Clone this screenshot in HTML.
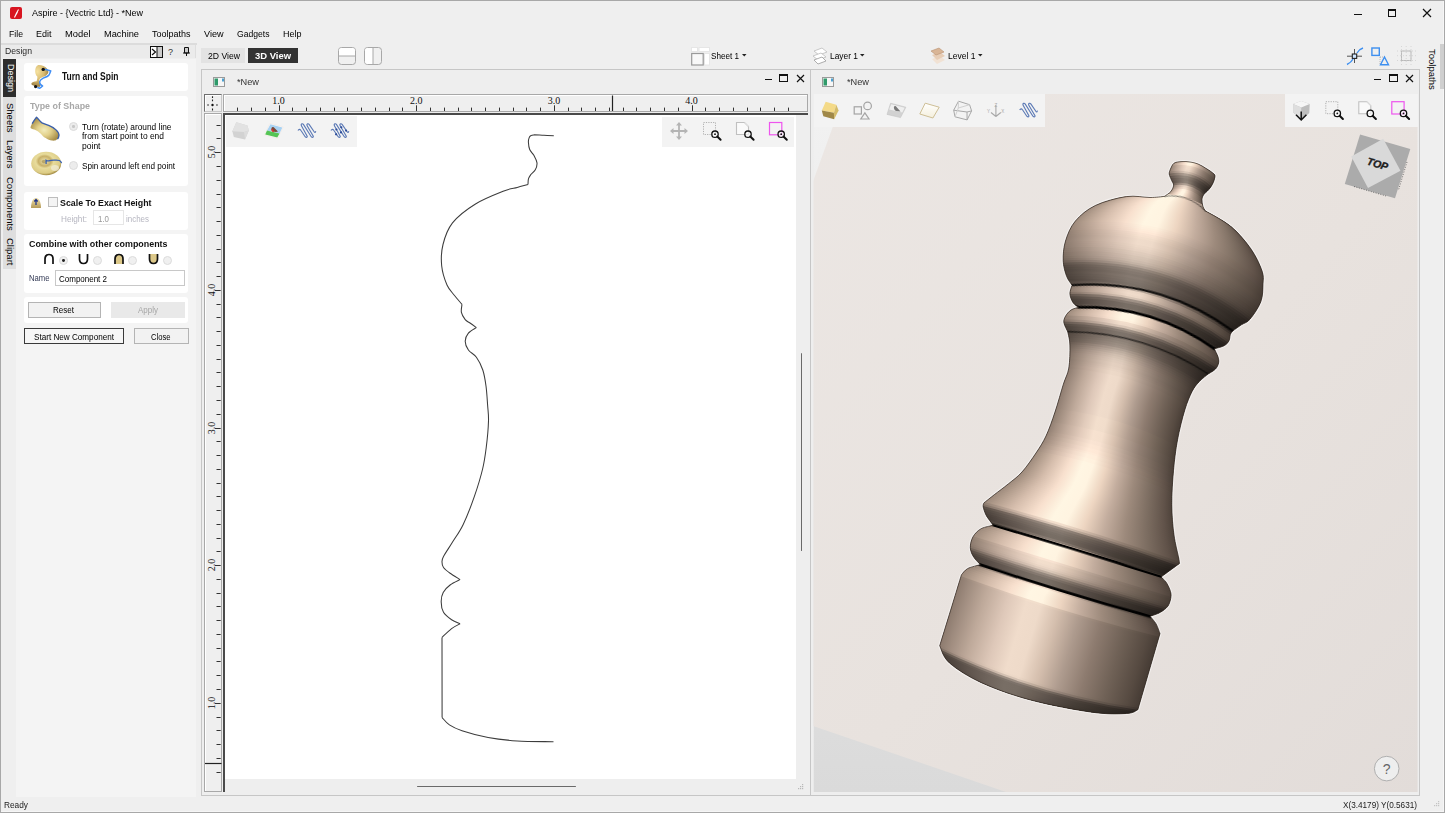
<!DOCTYPE html>
<html><head><meta charset="utf-8">
<style>
*{margin:0;padding:0;box-sizing:border-box}
html,body{width:1445px;height:813px;overflow:hidden;background:#efefef;font-family:"Liberation Sans",sans-serif;font-size:9.5px;color:#000}
.a{position:absolute}
.t{position:absolute;white-space:nowrap;line-height:1}
.b{font-weight:bold}
svg{position:absolute;overflow:visible}
.card{position:absolute;left:24px;width:164px;background:#fff;border-radius:3px}
.rad{position:absolute;width:9px;height:9px;border-radius:50%;background:#ececec;border:1px solid #dcdcdc}
</style></head><body>
<div class="a" style="left:0;top:0;width:1445px;height:813px;border:1px solid #a8a8a8"></div><div class="a" style="left:1443px;top:1px;width:1px;height:811px;background:#f6f6f6"></div><div class="a" style="left:1px;top:811px;width:1443px;height:1px;background:#f6f6f6"></div>

<!-- ============ TITLE BAR ============ -->
<svg style="left:10px;top:7px" width="13" height="13"><rect x="0" y="0" width="12" height="12" rx="2" fill="#d81520"/><path d="M4.5 10.5 C6 7 7 5 8.5 2.5 M5.5 8.5 L7.5 5" stroke="#fff" stroke-width="1.1" fill="none"/></svg>
<div class="t fit" style="left:32px;top:7.7px;;transform:scaleX(0.9469);transform-origin:0 0">Aspire - {Vectric Ltd} - *New</div>
<div class="a" style="left:1354px;top:13.5px;width:8px;height:1.3px;background:#111"></div>
<div class="a" style="left:1388px;top:9px;width:8px;height:8px;border:1px solid #111;border-top-width:2px"></div>
<svg style="left:1422px;top:8px" width="10" height="10"><path d="M1 1L9 9M9 1L1 9" stroke="#111" stroke-width="1.2"/></svg>

<!-- ============ MENU ============ -->
<div class="t fit" style="left:9px;top:29.3px;;transform:scaleX(0.9143);transform-origin:0 0">File</div>
<div class="t fit" style="left:36px;top:29.3px;;transform:scaleX(0.9466);transform-origin:0 0">Edit</div>
<div class="t fit" style="left:65px;top:29.3px;;transform:scaleX(0.9855);transform-origin:0 0">Model</div>
<div class="t fit" style="left:103.5px;top:29.3px;;transform:scaleX(0.9743);transform-origin:0 0">Machine</div>
<div class="t fit" style="left:152px;top:29.3px;;transform:scaleX(0.9466);transform-origin:0 0">Toolpaths</div>
<div class="t fit" style="left:204px;top:29.3px;;transform:scaleX(0.9549);transform-origin:0 0">View</div>
<div class="t fit" style="left:237px;top:29.3px;;transform:scaleX(0.9047);transform-origin:0 0">Gadgets</div>
<div class="t fit" style="left:283px;top:29.3px;;transform:scaleX(0.9464);transform-origin:0 0">Help</div>


<!-- ============ LEFT PANEL ============ -->
<div class="a" style="left:1px;top:44px;width:196px;height:753px;background:#efefef"></div>
<div class="a" style="left:1px;top:43px;width:196px;height:1.5px;background:#dcdcdc"></div><div class="a" style="left:2px;top:44.5px;width:194px;height:13.5px;background:#ebebeb;border-right:1px solid #dedede"></div>
<div class="t fit" style="left:4.5px;top:45.6px;color:#2a2a2a;transform:scaleX(0.9128);transform-origin:0 0">Design</div>
<svg style="left:150px;top:46px" width="13" height="12"><rect x="0.5" y="0.5" width="12" height="11" fill="#fff" stroke="#111"/><rect x="7" y="1" width="5" height="10" fill="#ccc"/><path d="M7 1V11" stroke="#111"/><path d="M2 3L5.5 6L2 9" stroke="#111" stroke-width="1.2" fill="none"/></svg>
<div class="t" style="left:168px;top:47.5px;font-size:9px;color:#333">?</div>
<svg style="left:183px;top:47px" width="7" height="9"><path d="M1.5 0.5H5.5V6H1.5Z" fill="#ccc" stroke="#111"/><path d="M0 6H7M3.5 6V9" stroke="#111"/></svg>

<!-- tab strip -->
<div class="a" style="left:3px;top:59px;width:13px;height:210px;background:#dedede"></div>
<div class="a" style="left:3px;top:59px;width:13px;height:38px;background:#2d2d2d"></div>
<div class="a" style="left:16px;top:59px;width:180px;height:738px;background:#f4f4f4"></div>
<div class="t" style="left:15px;top:64px;transform:rotate(90deg);transform-origin:0 0;color:#fff;font-size:9px">Design</div>
<div class="t" style="left:15px;top:102.5px;transform:rotate(90deg);transform-origin:0 0;font-size:9.5px">Sheets</div>
<div class="t" style="left:15px;top:140px;transform:rotate(90deg);transform-origin:0 0;font-size:9.5px">Layers</div>
<div class="t" style="left:15px;top:177px;transform:rotate(90deg);transform-origin:0 0;font-size:9.5px">Components</div>
<div class="t" style="left:15px;top:238px;transform:rotate(90deg);transform-origin:0 0;font-size:9.5px">Clipart</div>

<!-- card: Turn and Spin -->
<div class="card" style="top:63px;height:28px"></div>
<svg style="left:28px;top:62px" width="28" height="28">
 <defs><radialGradient id="gold" cx="0.35" cy="0.3" r="0.75"><stop offset="0" stop-color="#f6e2a0"/><stop offset="0.55" stop-color="#d6b86e"/><stop offset="1" stop-color="#8c7038"/></radialGradient></defs>
 <path d="M10.3 3.1 C13 2.8 17.5 4.5 19.3 6.9 C20.8 8.8 21 11 18.6 13.1 C17 14.5 15 15 13.8 15.5 C12 16 11.5 17 11 19.3 C12.5 20.5 13 22 12 24.8 C10 25 8 24.6 6.9 24.1 C4.5 23.5 3 22.8 3.4 21.5 C3.6 20.5 6 19.5 8.6 19.3 C9.3 17 9.5 15.5 9.3 14.5 C8 13.5 7.4 12 7.2 9.5 C7.2 6.5 7.8 4.2 10.3 3.1Z" fill="url(#gold)"/>
 <path d="M16.2 7.2 C18 7.5 21 8 22.7 9 C22 11 21.5 12.5 20.7 13.4 C19 15 16.5 15.5 15.2 16.2 C13.5 17.2 12 18.5 11.7 19.6 C11.5 21 12 21.8 12.4 22.4 C13 23 14 23.5 14.5 24.1 C13.5 25.2 12.5 26 11.7 26.2 C10.8 26 10 25.8 9.3 25.5" stroke="#3f8ef5" stroke-width="1.5" fill="none"/>
 <circle cx="15.2" cy="7.4" r="1.7" fill="#111"/><circle cx="7.6" cy="24.6" r="1.6" fill="#111"/>
</svg>
<div class="t b fit" style="left:62px;top:72.2px;font-size:10px;color:#111;transform:scaleX(0.8498);transform-origin:0 0">Turn and Spin</div>

<!-- card: Type of shape -->
<div class="card" style="top:95.5px;height:90px"></div>
<div class="t b fit" style="left:30.3px;top:100.8px;color:#a8a8a8;transform:scaleX(0.9341);transform-origin:0 0">Type of Shape</div>
<svg style="left:28px;top:114px" width="34" height="28">
 <defs><radialGradient id="gold2" cx="0.5" cy="0.55" r="0.55" gradientTransform="rotate(30 0.5 0.5)"><stop offset="0" stop-color="#f2ecbc"/><stop offset="0.45" stop-color="#e2d08a"/><stop offset="1" stop-color="#a88e48"/></radialGradient></defs>
 <path d="M8.5 3.3 C6.5 5 5 7.5 4.1 9.6 C3.3 11.5 2.4 13 2.6 14 C4 15.2 6 15.5 7.4 15.9 C9.5 16.8 11 18 12.2 19.2 C14 21 15.5 23 17.7 24 C19.5 25.3 22 26.5 24 26.6 C26 26.8 28 26.5 28.8 25.5 C30.5 24.3 31.2 22.8 31 21.4 C30.8 19.5 30.5 18 29.5 17 C28 15 26 13.8 24 12.9 C21 11.5 18 10.5 15.5 9.6 C13.5 8.8 12.2 7.5 11.1 6.3Z" fill="url(#gold2)"/>
 <path d="M4.1 9.6 C5.5 7.5 7 5 8.5 3.3 C10.5 5 12 7.5 14 8.9 C16 10 18.5 10.6 20.7 11.4 C23.5 12.5 26 14 28 15.9 C30 17.8 31.2 19.5 31 21.4 C30.8 23 30.2 24.3 29.5 25.1" stroke="#3a5eaa" stroke-width="1.3" fill="none"/>
</svg>
<div class="rad" style="left:68.7px;top:122px"></div>
<div class="a" style="left:72px;top:125.3px;width:2.5px;height:2.5px;border-radius:50%;background:#c8c8c8"></div>
<div class="t fit" style="left:81.8px;top:121.8px;;transform:scaleX(0.8766);transform-origin:0 0">Turn (rotate) around line</div>
<div class="t fit" style="left:81.8px;top:131.1px;;transform:scaleX(0.8872);transform-origin:0 0">from start point to end</div>
<div class="t fit" style="left:81.8px;top:140.6px;;transform:scaleX(0.8976);transform-origin:0 0">point</div>
<svg style="left:28px;top:148px" width="36" height="30">
 <defs><radialGradient id="gold3" cx="0.45" cy="0.4" r="0.6"><stop offset="0" stop-color="#f0e8b4"/><stop offset="0.35" stop-color="#c8b068"/><stop offset="0.5" stop-color="#e8dc9c"/><stop offset="0.85" stop-color="#dccb84"/><stop offset="1" stop-color="#a08840"/></radialGradient></defs>
 <ellipse cx="18.2" cy="15.5" rx="15" ry="11.8" fill="url(#gold3)"/>
 <ellipse cx="27" cy="20" rx="4" ry="3" fill="#f4f0dc" opacity="0.7"/>
 <ellipse cx="16" cy="13.6" rx="2.2" ry="1.8" fill="#9c8644" opacity="0.6"/>
 <path d="M18.1 15.9 V12.2 C19 12.8 20 13 20.7 12.9 C22.5 12.4 24 12.2 25.8 12.2 C28 12.2 30 12 31.4 12.5 C32.5 13.2 33.3 14.2 33.6 15.1" stroke="#3a62b0" stroke-width="1.3" fill="none"/>
</svg>
<div class="rad" style="left:68.7px;top:161.1px"></div>
<div class="t fit" style="left:81.8px;top:160.6px;;transform:scaleX(0.8589);transform-origin:0 0">Spin around left end point</div>

<!-- card: scale -->
<div class="card" style="top:191.5px;height:38.5px"></div>
<svg style="left:30px;top:197px" width="12" height="12">
 <defs><linearGradient id="gold4" x1="0" y1="0" x2="0" y2="1"><stop offset="0" stop-color="#efe0a8"/><stop offset="1" stop-color="#b59a58"/></linearGradient></defs>
 <path d="M1 11 C1 5 3 1 6 1 C9 1 11 5 11 11Z" fill="url(#gold4)"/>
 <path d="M6 8V3M4.3 4.5L6 2.5L7.7 4.5" stroke="#1a2f8a" stroke-width="1.2" fill="none"/>
</svg>
<div class="a" style="left:48px;top:197px;width:9.5px;height:9.5px;background:#f4f4f4;border:1px solid #bdbdbd"></div>
<div class="t b fit" style="left:60.3px;top:197.8px;color:#111;transform:scaleX(0.9283);transform-origin:0 0">Scale To Exact Height</div>
<div class="t fit" style="left:60.6px;top:214.2px;color:#b6b6c0;transform:scaleX(0.8635);transform-origin:0 0">Height:</div>
<div class="a" style="left:92.8px;top:210.4px;width:31px;height:14.5px;background:#fff;border:1px solid #e6e6e6"></div>
<div class="t fit" style="left:97.5px;top:213.5px;color:#9a9a9a;transform:scaleX(0.8322);transform-origin:0 0">1.0</div>
<div class="t fit" style="left:125.8px;top:214.2px;color:#b6b6c0;transform:scaleX(0.8373);transform-origin:0 0">inches</div>

<!-- card: combine -->
<div class="card" style="top:234px;height:58.5px"></div>
<div class="t b fit" style="left:29.2px;top:239px;color:#111;transform:scaleX(0.9372);transform-origin:0 0">Combine with other components</div>
<svg style="left:43px;top:253px" width="130" height="13">
 <path d="M2 11V6 C2 3 4 1.5 6 1.5 C8 1.5 10 3 10 6V11" stroke="#111" stroke-width="1.7" fill="none"/>
 <path d="M36.5 1V6 C36.5 9 38.5 10.5 40.5 10.5 C42.5 10.5 44.5 9 44.5 6V1" stroke="#111" stroke-width="1.7" fill="none"/>
 <path d="M72 11V6 C72 3 74 1.5 76 1.5 C78 1.5 80 3 80 6V11Z" fill="#dcc889"/>
 <path d="M72 11V6 C72 3 74 1.5 76 1.5 C78 1.5 80 3 80 6V11" stroke="#111" stroke-width="1.7" fill="none"/>
 <path d="M106.5 1V6 C106.5 9 108.5 10.5 110.5 10.5 C112.5 10.5 114.5 9 114.5 6V1Z" fill="#dcc889"/>
 <path d="M106.5 1V6 C106.5 9 108.5 10.5 110.5 10.5 C112.5 10.5 114.5 9 114.5 6V1" stroke="#111" stroke-width="1.7" fill="none"/>
</svg>
<div class="rad" style="left:58.8px;top:256px;background:#f0f0f0"></div>
<div class="a" style="left:61.9px;top:259.1px;width:2.8px;height:2.8px;border-radius:50%;background:#222"></div>
<div class="rad" style="left:92.6px;top:256px;background:#f0f0f0"></div>
<div class="rad" style="left:127.5px;top:256px;background:#f0f0f0"></div>
<div class="rad" style="left:163px;top:256px;background:#f0f0f0"></div>
<div class="t fit" style="left:28.8px;top:272.9px;color:#333a55;transform:scaleX(0.8089);transform-origin:0 0">Name</div>
<div class="a" style="left:54.5px;top:270.4px;width:130.5px;height:15.2px;background:#fff;border:1px solid #c8c8c8"></div>
<div class="t fit" style="left:58.6px;top:273.5px;;transform:scaleX(0.8414);transform-origin:0 0">Component 2</div>

<!-- card: buttons -->
<div class="card" style="top:297px;height:26px"></div>
<div class="a" style="left:28px;top:302.2px;width:73px;height:15.5px;background:#f2f2f2;border:1px solid #b4b4b4"></div>
<div class="t fit" style="left:52.9px;top:305.3px;;transform:scaleX(0.8458);transform-origin:0 0">Reset</div>
<div class="a" style="left:110.8px;top:301.5px;width:74px;height:16.5px;background:#e9e9e9"></div>
<div class="t fit" style="left:137.5px;top:305.3px;color:#a6a6a6;transform:scaleX(0.8416);transform-origin:0 0">Apply</div>
<div class="a" style="left:24.2px;top:328.3px;width:100px;height:15.3px;background:#f6f6f6;border:1px solid #3a3a3a"></div>
<div class="t fit" style="left:33.6px;top:331.6px;;transform:scaleX(0.8559);transform-origin:0 0">Start New Component</div>
<div class="a" style="left:134px;top:328.3px;width:54.6px;height:15.3px;background:#f2f2f2;border:1px solid #b4b4b4"></div>
<div class="t fit" style="left:150.6px;top:331.6px;;transform:scaleX(0.8026);transform-origin:0 0">Close</div>

<!-- ============ TOP TOOLBAR ============ -->
<div class="a" style="left:201px;top:48px;width:44px;height:15px;background:#e3e3e3"></div>
<div class="t fit" style="left:208px;top:51.2px;;transform:scaleX(0.9090);transform-origin:0 0">2D View</div>
<div class="a" style="left:248px;top:48.2px;width:50px;height:14.6px;background:#333"></div>
<div class="t b fit" style="left:255px;top:51.2px;color:#fff;transform:scaleX(0.9927);transform-origin:0 0">3D View</div>
<svg style="left:338px;top:46.5px" width="18" height="18"><rect x="0.5" y="0.5" width="17" height="17" rx="3" fill="#f0f0f0" stroke="#a8a8a8"/><path d="M1 9V3.5C1 2 2 1 3.5 1H14.5C16 1 17 2 17 3.5V9Z" fill="#fff"/><path d="M0.5 9H17.5" stroke="#a8a8a8"/></svg>
<svg style="left:363.5px;top:46.5px" width="18" height="18"><rect x="0.5" y="0.5" width="17" height="17" rx="3" fill="#f0f0f0" stroke="#a8a8a8"/><path d="M9 1H3.5C2 1 1 2 1 3.5V14.5C1 16 2 17 3.5 17H9Z" fill="#fff"/><path d="M9 0.5V17.5" stroke="#a8a8a8"/></svg>

<svg style="left:691px;top:46.5px" width="19" height="19"><rect x="0.5" y="0.5" width="6" height="4" fill="#fff" stroke="#e6e6e6"/><rect x="8" y="0.5" width="10.5" height="4" fill="#fff" stroke="#e6e6e6"/><rect x="0.7" y="6.5" width="11.5" height="11.5" fill="#f8f8f8" stroke="#999" stroke-width="1.2"/><rect x="13.5" y="6.5" width="5" height="11.5" fill="#fff" stroke="#e6e6e6"/></svg>
<div class="t fit" style="left:710.5px;top:50.6px;;transform:scaleX(0.8550);transform-origin:0 0">Sheet 1</div>
<svg style="left:741.5px;top:54px" width="5" height="3"><path d="M0 0H4.5L2.25 2.5Z" fill="#222"/></svg>
<svg style="left:811px;top:47px" width="18" height="18"><path d="M3 4L11 1L16 5L8 8Z" fill="#fff" stroke="#bbb" stroke-width="0.8"/><path d="M2 9L10 6L15 10L7 13Z" fill="#fff" stroke="#bbb" stroke-width="0.8"/><path d="M3 13L11 10L15 14L7 17Z" fill="#fff" stroke="#999" stroke-width="0.8"/></svg>
<div class="t fit" style="left:829.5px;top:50.6px;;transform:scaleX(0.8836);transform-origin:0 0">Layer 1</div>
<svg style="left:859.5px;top:54px" width="5" height="3"><path d="M0 0H4.5L2.25 2.5Z" fill="#222"/></svg>
<svg style="left:930px;top:47px" width="17" height="18"><path d="M2 12L10 9L15 13L7 17Z" fill="#f1e2d4"/><path d="M2 8L10 5L15 9L7 13Z" fill="#e7cdb6"/><path d="M1 4L9 1L14 5L6 8Z" fill="#d9b596" stroke="#b89070" stroke-width="0.6"/></svg>
<div class="t fit" style="left:948.4px;top:50.6px;;transform:scaleX(0.8975);transform-origin:0 0">Level 1</div>
<svg style="left:977.5px;top:54px" width="5" height="3"><path d="M0 0H4.5L2.25 2.5Z" fill="#222"/></svg>

<svg style="left:1346px;top:46.5px" width="18" height="18"><path d="M1 17.5 C4 16 6 14 7 12 M11 6 C12 4 14 2 17 1" stroke="#3d8ff0" stroke-width="1.4" fill="none"/><path d="M8.5 2V7M8.5 11V16M1 9.2H6M11 9.2H16" stroke="#555" stroke-width="1"/><rect x="6.3" y="7" width="4.4" height="4.4" fill="#cfe6ff" stroke="#222" stroke-width="1.1"/></svg>
<svg style="left:1371px;top:46.5px" width="19" height="19"><rect x="0.9" y="1" width="7.4" height="7.4" fill="none" stroke="#3d8ff0" stroke-width="1.4"/><path d="M9 10H15M9 10V17" stroke="#aaa" stroke-width="0.8" stroke-dasharray="1 1"/><path d="M13.5 10L17.5 17.8H9.5Z" fill="none" stroke="#3d8ff0" stroke-width="1.4"/></svg>
<svg style="left:1397px;top:46px" width="19" height="19"><rect x="4.5" y="5" width="9.5" height="9.5" fill="none" stroke="#bbb" stroke-width="1"/><path d="M4.5 0V19M9.2 0V19M14 0V19M0 5H19M0 9.7H19M0 14.5H19" stroke="#ccc" stroke-width="0.7" stroke-dasharray="1 2"/></svg>

<!-- right toolpaths strip -->
<div class="t" style="left:1436.5px;top:49px;transform:rotate(90deg);transform-origin:0 0;font-size:9.5px">Toolpaths</div>
<div class="a" style="left:1440px;top:44px;width:4px;height:45px;background:#cfcfcf"></div>

<!-- ============ 2D VIEW ============ -->

<div class="a" style="left:201px;top:69px;width:610px;height:727px;border:1px solid #c6c6c6;background:#eeeeee"></div>
<svg style="left:213px;top:77px" width="12" height="10"><rect x="0.5" y="0.5" width="11" height="9" fill="#f6f6f6" stroke="#9a9a9a"/><rect x="1.5" y="1.5" width="3.5" height="7" fill="#2f9a6a"/><rect x="9" y="1.5" width="2" height="3" fill="#4aa0d0"/></svg>
<div class="t fit" style="left:237px;top:76.8px;color:#333;transform:scaleX(0.9690);transform-origin:0 0">*New</div>
<div class="a" style="left:764.5px;top:79px;width:7px;height:1.4px;background:#111"></div>
<div class="a" style="left:779px;top:74px;width:8.5px;height:8px;border:1px solid #111;border-top-width:2px"></div>
<svg style="left:795.5px;top:73.5px" width="9" height="9"><path d="M1 1L8 8M8 1L1 8" stroke="#111" stroke-width="1.2"/></svg>

<!-- ruler corner -->
<div class="a" style="left:204px;top:94px;width:18px;height:18px;background:#efefef;border-top:1px solid #6e6e6e;border-left:1px solid #6e6e6e;border-right:1px solid #c8c8c8;border-bottom:1px solid #c8c8c8;box-shadow:inset 1px 1px 0 #fff"></div>
<svg style="left:204px;top:94px" width="18" height="18"><path d="M8.5 2.3V4M8.5 5.6V7.3M8.5 14.5V16.5M3.2 11H4.9M12.1 11H13.8" stroke="#222" stroke-width="1.1"/><circle cx="8.5" cy="11" r="1.2" fill="#111"/></svg>
<!-- top ruler -->
<div class="a" style="left:223px;top:94px;width:584.5px;height:18px;background:#efefef;border:1px solid #a8a8a8;box-shadow:inset 1px 1px 0 #fff"></div>
<svg style="left:0;top:0" width="1445" height="813"><path d="M237.5 107.6V111 M251.5 107.6V111 M265.5 107.6V111 M279.5 105.3V111 M292.5 107.6V111 M306.5 107.6V111 M320.5 107.6V111 M334.5 107.6V111 M347.5 107.6V111 M361.5 107.6V111 M375.5 107.6V111 M389.5 107.6V111 M402.5 107.6V111 M416.5 105.3V111 M430.5 107.6V111 M444.5 107.6V111 M458.5 107.6V111 M471.5 107.6V111 M485.5 107.6V111 M499.5 107.6V111 M513.5 107.6V111 M526.5 107.6V111 M540.5 107.6V111 M554.5 105.3V111 M568.5 107.6V111 M581.5 107.6V111 M595.5 107.6V111 M609.5 107.6V111 M623.5 107.6V111 M636.5 107.6V111 M650.5 107.6V111 M664.5 107.6V111 M678.5 107.6V111 M692.5 105.3V111 M705.5 107.6V111 M719.5 107.6V111 M733.5 107.6V111 M747.5 107.6V111 M760.5 107.6V111 M774.5 107.6V111 M788.5 107.6V111" stroke="#333" stroke-width="1"/><path d="M612.5 95.5V111" stroke="#222" stroke-width="1.2"/></svg>
<div class="t" style="left:278.6px;top:96.2px;width:20px;margin-left:-10px;text-align:center;font-family:'Liberation Serif',serif;font-size:10px;color:#111">1.0</div>
<div class="t" style="left:416.3px;top:96.2px;width:20px;margin-left:-10px;text-align:center;font-family:'Liberation Serif',serif;font-size:10px;color:#111">2.0</div>
<div class="t" style="left:553.9px;top:96.2px;width:20px;margin-left:-10px;text-align:center;font-family:'Liberation Serif',serif;font-size:10px;color:#111">3.0</div>
<div class="t" style="left:691.5px;top:96.2px;width:20px;margin-left:-10px;text-align:center;font-family:'Liberation Serif',serif;font-size:10px;color:#111">4.0</div>

<!-- vertical ruler -->
<div class="a" style="left:204px;top:113px;width:18px;height:679px;background:#efefef;border:1px solid #a8a8a8;box-shadow:inset 1px 1px 0 #fff"></div>
<svg style="left:0;top:0" width="1445" height="813"><path d="M216.5 772.5H220.7 M216.5 758.5H220.7 M216.5 744.5H220.7 M216.5 730.5H220.7 M216.5 717.5H220.7 M215 703.5H220.7 M216.5 689.5H220.7 M216.5 675.5H220.7 M216.5 661.5H220.7 M216.5 648.5H220.7 M216.5 634.5H220.7 M216.5 620.5H220.7 M216.5 606.5H220.7 M216.5 593.5H220.7 M216.5 579.5H220.7 M215 565.5H220.7 M216.5 551.5H220.7 M216.5 538.5H220.7 M216.5 524.5H220.7 M216.5 510.5H220.7 M216.5 496.5H220.7 M216.5 483.5H220.7 M216.5 469.5H220.7 M216.5 455.5H220.7 M216.5 441.5H220.7 M215 428.5H220.7 M216.5 414.5H220.7 M216.5 400.5H220.7 M216.5 386.5H220.7 M216.5 372.5H220.7 M216.5 359.5H220.7 M216.5 345.5H220.7 M216.5 331.5H220.7 M216.5 317.5H220.7 M216.5 304.5H220.7 M215 290.5H220.7 M216.5 276.5H220.7 M216.5 262.5H220.7 M216.5 249.5H220.7 M216.5 235.5H220.7 M216.5 221.5H220.7 M216.5 207.5H220.7 M216.5 194.5H220.7 M216.5 180.5H220.7 M216.5 166.5H220.7 M215 152.5H220.7 M216.5 138.5H220.7 M216.5 125.5H220.7" stroke="#333" stroke-width="1"/><path d="M205 763.5H221.5" stroke="#222" stroke-width="1.2"/></svg>
<div class="t" style="left:206.6px;top:702.8px;width:20px;margin-top:10px;text-align:center;transform:rotate(-90deg);transform-origin:0 0;font-family:'Liberation Serif',serif;font-size:10px;color:#111">1.0</div>
<div class="t" style="left:206.6px;top:565.1px;width:20px;margin-top:10px;text-align:center;transform:rotate(-90deg);transform-origin:0 0;font-family:'Liberation Serif',serif;font-size:10px;color:#111">2.0</div>
<div class="t" style="left:206.6px;top:427.5px;width:20px;margin-top:10px;text-align:center;transform:rotate(-90deg);transform-origin:0 0;font-family:'Liberation Serif',serif;font-size:10px;color:#111">3.0</div>
<div class="t" style="left:206.6px;top:289.9px;width:20px;margin-top:10px;text-align:center;transform:rotate(-90deg);transform-origin:0 0;font-family:'Liberation Serif',serif;font-size:10px;color:#111">4.0</div>
<div class="t" style="left:206.6px;top:152.2px;width:20px;margin-top:10px;text-align:center;transform:rotate(-90deg);transform-origin:0 0;font-family:'Liberation Serif',serif;font-size:10px;color:#111">5.0</div>

<!-- drawing area -->
<div class="a" style="left:223px;top:113px;width:584px;height:679px;background:#eeeeee"></div>
<div class="a" style="left:223px;top:113px;width:572.5px;height:666px;background:#fff;border-top:2px solid #4a4a4a;border-left:2px solid #4a4a4a"></div>
<div class="a" style="left:223px;top:779px;width:2px;height:13px;background:#4a4a4a"></div>
<div class="a" style="left:795.5px;top:113px;width:12px;height:2px;background:#4a4a4a"></div>
<div class="a" style="left:417px;top:785.8px;width:159px;height:1.6px;background:#6a6a6a;border-radius:1px"></div>
<div class="a" style="left:800.8px;top:353px;width:1.6px;height:198px;background:#6a6a6a;border-radius:1px"></div>
<!-- toolbars -->
<div class="a" style="left:226.4px;top:116.4px;width:130.5px;height:30.6px;background:#f3f3f3"></div>
<div class="a" style="left:662.2px;top:116.5px;width:132.3px;height:30.6px;background:#f3f3f3"></div>
<svg style="left:0;top:0" width="1445" height="813"><path d="M236.3 122.2 L247.5 125.5 L248.8 130.5 L245 139.6 L233.8 137.1 L232.4 131.3Z" fill="#d2d2d2"/><path d="M236.3 122.2 L247.5 125.5 L248.8 130.5 L244 132 L232.4 131.3Z" fill="#e2e2e2"/><path d="M244 132 L248.8 130.5 L245 139.6Z" fill="#dcdcdc"/><path d="M269.9 123.4 L283.2 126.9 L277.8 138.3 L264.5 135Z" fill="#fff" stroke="#f0e6e0" stroke-width="0.6"/><path d="M270.4 124.2 L282.4 127.4 L279.5 133.6 L267 130.6Z" fill="#a9d2f2"/><path d="M267 130.6 L279.5 133.6 L277.3 137.6 L265.2 134.5Z" fill="#55c455"/><path d="M271.5 128 C272 126.5 274 126.8 274.5 128 L278 131.5 L276 132 L273 131.5 C272 131.5 271 130 271.5 128Z" fill="#7a4a3a"/><path d="M271.2 129 C271.5 131.5 273 132.5 274 132 L273 129.5Z" fill="#e03030"/><g transform="translate(295.0 120.0)"><path d="M3 10.5 C3.8 9 5 9 5.8 10.3 L9.8 16.3 C10.6 17.8 12.6 17.6 12.2 16.2 L6.3 5.6 C5.6 3.8 7.6 3.2 8.4 4.4 L15.9 16.3 C16.7 17.8 18.7 17.6 18.3 16.2 L12 5.6 C11.3 3.8 13.3 3.2 14.1 4.4 L19.5 12.3 C20 13 20.5 12 20.8 11.1" fill="none" stroke="#5b79b5" stroke-width="1.1"/></g><g transform="translate(328.0 120.0)"><path d="M3 10.5 C3.8 9 5 9 5.8 10.3 L9.8 16.3 C10.6 17.8 12.6 17.6 12.2 16.2 L6.3 5.6 C5.6 3.8 7.6 3.2 8.4 4.4 L15.9 16.3 C16.7 17.8 18.7 17.6 18.3 16.2 L12 5.6 C11.3 3.8 13.3 3.2 14.1 4.4 L19.5 12.3 C20 13 20.5 12 20.8 11.1" fill="none" stroke="#5b79b5" stroke-width="1.1"/><circle cx="8.4" cy="9.5" r="1.1" fill="#2a4a98"/><circle cx="8.1" cy="14.3" r="1.1" fill="#2a4a98"/><circle cx="13.3" cy="7.3" r="1.1" fill="#2a4a98"/><circle cx="13.0" cy="12.4" r="1.1" fill="#2a4a98"/><circle cx="18.1" cy="10.6" r="1.1" fill="#2a4a98"/></g><g stroke="#b4b4b4" stroke-width="1.8" fill="#b4b4b4"><path d="M671 131H687M679 123V139" /></g><path d="M670 131L673.5 128V134Z M688 131L684.5 128V134Z M679 122L676 125.5H682Z M679 140L676 136.5H682Z" fill="#b4b4b4"/><rect x="703.5" y="122.5" width="12" height="12" fill="none" stroke="#b0b0b0" stroke-width="1" stroke-dasharray="1.2 1.2"/><circle cx="715.0" cy="134.2" r="3.2" fill="#fff" fill-opacity="0.6" stroke="#111" stroke-width="1.3"/><path d="M717.3 136.5L720.6 139.8" stroke="#111" stroke-width="2" stroke-linecap="round"/><circle cx="715.0" cy="134.2" r="0.9" fill="#111"/><path d="M736.5 122.5H744.5L748.5 126.5V134.5H736.5Z" fill="#fafafa" stroke="#c0c0c0" stroke-width="1.1"/><path d="M744.5 122.5L748.5 126.5" stroke="#ddd" stroke-width="1"/><circle cx="748.0" cy="134.2" r="3.2" fill="#fff" fill-opacity="0.6" stroke="#111" stroke-width="1.3"/><path d="M750.3 136.5L753.6 139.8" stroke="#111" stroke-width="2" stroke-linecap="round"/><rect x="769.5" y="122.5" width="12.3" height="12.3" fill="none" stroke="#ee55ee" stroke-width="1.2"/><circle cx="781.2" cy="134.2" r="3.2" fill="#fff" fill-opacity="0.6" stroke="#111" stroke-width="1.3"/><path d="M783.5 136.5L786.8 139.8" stroke="#111" stroke-width="2" stroke-linecap="round"/><circle cx="781.2" cy="134.2" r="0.9" fill="#111"/></svg>
<svg style="left:0;top:0" width="1445" height="813"><path d="M553.8 135.8 C552.1 135.7 547.3 135.5 543.9 135.3 C540.5 135.2 535.8 134.8 533.6 134.9 C531.4 135.0 531.4 135.3 530.6 135.8 C529.9 136.3 529.5 136.8 529.1 137.9 C528.7 139.0 528.3 140.3 528.4 142.2 C528.5 144.1 528.8 147.3 529.7 149.5 C530.6 151.7 532.8 153.4 534.0 155.6 C535.2 157.8 536.8 160.5 537.0 162.9 C537.2 165.3 536.4 167.8 535.3 169.8 C534.2 171.8 531.8 173.3 530.6 174.9 C529.5 176.5 528.8 177.6 528.4 179.2 C528.0 180.8 528.1 183.5 528.0 184.4 M528.0 184.4 C526.2 184.9 521.2 186.3 517.2 187.4 C513.2 188.5 510.8 188.2 503.9 191.0 C496.9 193.8 484.1 198.7 475.5 204.0 C466.9 209.3 457.9 216.2 452.5 222.9 C447.1 229.7 444.8 237.3 443.0 244.5 C441.2 251.7 441.0 259.2 441.7 266.0 C442.4 272.8 444.9 280.1 447.0 285.0 C449.1 289.9 452.0 292.3 454.5 295.5 C457.0 298.7 460.8 302.9 462.0 304.4 M462.0 304.4 C461.9 305.7 460.9 309.9 461.4 312.4 C461.9 314.9 463.8 317.8 465.2 319.6 C466.6 321.4 468.1 321.7 470.0 323.0 C471.9 324.3 475.3 326.8 476.4 327.6 M476.4 327.6 C475.1 328.5 470.3 330.9 468.4 333.2 C466.5 335.5 465.2 338.4 465.2 341.2 C465.2 344.0 466.5 347.3 468.4 350.0 C470.3 352.7 474.0 353.9 476.4 357.2 C478.8 360.5 481.2 365.2 482.8 370.0 C484.4 374.8 485.2 380.2 486.0 386.0 C486.8 391.8 487.2 399.2 487.6 405.0 C488.0 410.8 488.7 414.0 488.5 421.0 C488.3 428.0 487.3 438.9 486.3 446.9 C485.3 454.9 484.6 460.7 482.6 469.0 C480.6 477.3 477.5 487.5 474.3 496.7 C471.1 505.9 466.9 516.7 463.2 524.4 C459.5 532.1 455.4 537.4 452.1 542.8 C448.8 548.1 445.2 553.3 443.5 556.5 C441.8 559.7 442.0 560.2 442.0 562.0 C442.0 563.8 442.1 565.6 443.5 567.5 C444.9 569.4 447.3 571.2 450.1 573.2 C452.9 575.2 458.4 578.5 460.1 579.6 M460.1 579.6 C458.4 580.5 452.9 582.9 450.1 585.0 C447.3 587.1 444.7 589.6 443.2 592.4 C441.7 595.2 441.1 598.7 441.2 602.0 C441.2 605.3 441.8 609.3 443.5 612.3 C445.2 615.2 448.8 617.8 451.6 619.7 C454.4 621.6 458.7 623.1 460.1 623.8 M460.1 623.8 C458.7 624.6 454.6 626.3 451.6 628.6 C448.6 630.9 443.6 635.9 442.0 637.4 M442.0 637.4 L442.1 717.6 M442.1 717.6 C443.3 718.8 446.1 722.7 449.4 724.9 C452.7 727.1 455.6 728.6 462.0 730.7 C468.4 732.8 478.9 735.8 488.1 737.5 C497.3 739.2 506.3 740.2 517.2 740.9 C528.1 741.6 547.5 741.6 553.5 741.8" stroke="#3c3c3c" stroke-width="1.05" fill="none"/></svg>


<!-- ============ 3D VIEW ============ -->
<div class="a" style="left:810px;top:69px;width:610px;height:727px;border:1px solid #c6c6c6;background:#eeeeee"></div>
<svg style="left:822px;top:77px" width="12" height="10"><rect x="0.5" y="0.5" width="11" height="9" fill="#f6f6f6" stroke="#9a9a9a"/><rect x="1.5" y="1.5" width="3.5" height="7" fill="#2f9a6a"/><rect x="9" y="1.5" width="2" height="3" fill="#4aa0d0"/></svg>
<div class="t fit" style="left:847px;top:76.8px;color:#333;transform:scaleX(0.9690);transform-origin:0 0">*New</div>
<div class="a" style="left:1374px;top:79px;width:7px;height:1.4px;background:#111"></div>
<div class="a" style="left:1389px;top:74px;width:8.5px;height:8px;border:1px solid #111;border-top-width:2px"></div>
<svg style="left:1405px;top:73.5px" width="9" height="9"><path d="M1 1L8 8M8 1L1 8" stroke="#111" stroke-width="1.2"/></svg>
<svg style="left:0;top:0" width="1445" height="813"><defs><linearGradient id="vbg" x1="0" y1="0" x2="0" y2="1"><stop offset="0" stop-color="#f2f2f2"/><stop offset="1" stop-color="#dadada"/></linearGradient><linearGradient id="wood" x1="0" y1="0" x2="1" y2="1"><stop offset="0" stop-color="#ece7e4"/><stop offset="0.5" stop-color="#e8e2de"/><stop offset="1" stop-color="#e1dbd8"/></linearGradient><clipPath id="vpc"><rect x="813.5" y="94" width="604" height="698"/></clipPath></defs><g clip-path="url(#vpc)"><rect x="813.5" y="94" width="604" height="698" fill="url(#vbg)"/><path d="M857 60 L1500 60 L1500 830 L1111 828 L790 718 L790 245 Z" fill="url(#wood)"/></g></svg>
<svg style="left:0;top:0" width="1445" height="813"><defs>
<clipPath id="sil"><path d="M1170.4 169.2 C1171.0 168.2 1172.1 164.5 1174.0 163.2 C1175.9 161.9 1179.3 161.8 1182.0 161.6 C1184.7 161.4 1187.3 161.6 1190.0 162.0 C1192.7 162.4 1195.3 162.9 1198.0 164.0 C1200.7 165.1 1203.3 166.7 1206.0 168.4 C1208.7 170.1 1212.5 172.4 1214.0 174.0 C1215.5 175.6 1215.0 176.3 1214.7 178.0 C1214.4 179.7 1213.5 182.4 1212.4 184.4 C1211.4 186.4 1209.9 188.3 1208.4 190.0 C1206.9 191.7 1204.7 193.2 1203.6 194.8 C1202.5 196.4 1202.1 197.7 1202.0 199.6 C1201.9 201.5 1202.3 204.1 1202.8 206.0 C1203.3 207.9 1204.8 210.0 1205.2 210.8 C1209.5 213.4 1223.4 220.3 1231.0 226.6 C1238.6 232.9 1245.6 241.3 1250.8 248.7 C1256.0 256.1 1260.0 264.9 1262.0 270.8 C1264.0 276.7 1263.2 278.8 1263.0 284.0 C1262.8 289.2 1263.0 295.9 1260.8 301.8 C1258.6 307.7 1253.2 315.4 1250.0 319.2 C1246.8 323.0 1244.3 322.9 1241.4 324.8 C1238.5 326.8 1234.2 329.9 1232.8 330.9 C1232.4 331.5 1230.9 333.0 1230.3 334.6 C1229.7 336.2 1230.0 339.0 1229.0 340.8 C1228.0 342.6 1226.7 344.4 1224.2 345.7 C1221.8 347.0 1216.0 348.3 1214.3 348.8 C1214.9 350.1 1217.3 354.5 1218.0 356.8 C1218.7 359.1 1219.0 360.9 1218.6 362.9 C1218.2 364.9 1217.2 367.1 1215.5 369.0 C1213.8 370.9 1209.4 373.2 1208.2 374.0 C1206.8 375.2 1202.2 378.5 1199.5 381.4 C1196.8 384.3 1194.7 386.4 1192.2 391.2 C1189.8 396.0 1187.2 401.9 1184.8 410.0 C1182.3 418.1 1179.4 429.9 1177.5 440.0 C1175.6 450.1 1174.5 459.7 1173.5 470.5 C1172.5 481.3 1171.7 494.2 1171.8 505.0 C1171.9 515.8 1172.8 526.2 1174.0 535.0 C1175.2 543.8 1177.8 553.3 1178.7 558.0 C1179.6 562.7 1179.4 562.5 1179.6 563.4 L1161.0 577.0 C1161.8 577.8 1164.5 579.8 1166.0 582.0 C1167.5 584.2 1169.2 587.6 1170.0 590.0 C1170.8 592.4 1171.3 593.9 1171.0 596.6 C1170.7 599.3 1169.8 603.4 1168.0 606.0 C1166.2 608.6 1163.0 610.8 1160.0 612.5 C1157.0 614.2 1151.7 615.7 1150.0 616.3 C1151.0 617.5 1154.3 620.8 1156.0 623.7 C1157.7 626.6 1159.3 631.9 1160.0 633.5 L1137.8 709.8 C1136.0 710.4 1134.3 713.1 1126.7 713.5 C1119.1 713.9 1108.0 714.5 1092.0 712.2 C1076.0 710.0 1049.1 704.9 1030.7 700.0 C1012.3 695.1 995.0 688.9 981.5 682.7 C968.0 676.5 956.5 669.1 949.5 663.0 C942.5 656.9 941.3 648.7 939.7 645.8 C942.6 636.5 953.2 601.9 956.8 590.0 C960.4 578.1 960.7 577.2 961.5 574.7 C962.5 573.7 964.5 570.3 967.6 568.6 C970.8 566.9 978.3 565.3 980.4 564.6 C979.3 563.4 975.4 559.9 973.7 557.1 C972.0 554.3 970.4 551.1 970.3 547.7 C970.2 544.3 971.2 540.0 973.0 536.8 C974.8 533.6 977.7 530.6 981.1 528.7 C984.5 526.8 991.3 525.9 993.3 525.3 C992.2 523.7 988.2 518.9 986.5 515.9 C984.8 512.9 983.7 509.1 983.2 507.0 C982.8 504.9 983.7 503.7 983.8 503.0 C985.6 501.6 990.3 497.8 994.4 494.6 C998.5 491.4 1003.6 487.8 1008.2 484.0 C1012.8 480.2 1017.4 477.2 1022.0 472.0 C1026.6 466.8 1032.0 459.0 1036.0 453.0 C1040.0 447.0 1042.8 442.8 1046.0 436.0 C1049.2 429.2 1052.1 420.6 1055.0 412.0 C1057.9 403.4 1061.0 391.7 1063.3 384.4 C1065.6 377.1 1067.7 374.6 1068.8 368.0 C1069.9 361.4 1070.1 351.1 1069.9 345.0 C1069.7 338.9 1068.1 333.9 1067.7 331.7 C1067.1 330.2 1064.3 325.4 1063.9 322.8 C1063.5 320.2 1064.3 318.3 1065.5 316.2 C1066.7 314.1 1068.8 311.5 1071.0 310.0 C1073.2 308.5 1077.4 307.8 1078.7 307.3 C1077.8 306.6 1074.7 305.1 1073.2 302.9 C1071.7 300.7 1070.1 296.9 1069.9 294.0 C1069.7 291.1 1071.7 286.7 1072.1 285.2 C1071.2 283.7 1068.1 280.4 1066.6 276.3 C1065.1 272.2 1063.4 266.7 1063.2 260.8 C1063.0 254.9 1063.5 247.6 1065.5 241.0 C1067.5 234.4 1070.4 226.9 1075.4 221.0 C1080.4 215.1 1086.8 209.6 1095.3 205.5 C1103.8 201.4 1117.2 197.9 1126.3 196.6 C1135.4 195.3 1143.7 197.5 1150.0 197.5 C1156.3 197.5 1162.0 196.6 1164.4 196.4 C1165.5 195.6 1169.3 193.5 1170.8 191.6 C1172.3 189.7 1173.5 187.1 1173.6 185.2 C1173.7 183.3 1172.3 182.3 1171.6 180.4 C1170.9 178.5 1169.4 175.9 1169.2 174.0 C1169.0 172.1 1170.2 170.0 1170.4 169.2Z"/></clipPath>
<filter id="bl1" x="-20%" y="-50%" width="140%" height="200%"><feGaussianBlur stdDeviation="0.7"/></filter>
<filter id="bl3" x="-20%" y="-50%" width="140%" height="200%"><feGaussianBlur stdDeviation="3"/></filter>
<linearGradient id="m47" x1="0" y1="0" x2="1" y2="0"><stop offset="0.00" stop-color="#9b887a"/><stop offset="0.05" stop-color="#b19c8c"/><stop offset="0.14" stop-color="#d5bdac"/><stop offset="0.25" stop-color="#f8e0ce"/><stop offset="0.34" stop-color="#fff6e3"/><stop offset="0.41" stop-color="#fff4e1"/><stop offset="0.50" stop-color="#edd5c1"/><stop offset="0.60" stop-color="#c3ad9e"/><stop offset="0.71" stop-color="#9d8a7c"/><stop offset="0.83" stop-color="#7c6d61"/><stop offset="0.94" stop-color="#605249"/><stop offset="1.00" stop-color="#4c4139"/></linearGradient>
<linearGradient id="m46" x1="0" y1="0" x2="1" y2="0"><stop offset="0.00" stop-color="#998678"/><stop offset="0.05" stop-color="#af9a8b"/><stop offset="0.14" stop-color="#d2baaa"/><stop offset="0.25" stop-color="#f5ddcc"/><stop offset="0.34" stop-color="#fff3e0"/><stop offset="0.41" stop-color="#fff1de"/><stop offset="0.50" stop-color="#ead2bf"/><stop offset="0.60" stop-color="#c1ab9c"/><stop offset="0.71" stop-color="#9b887b"/><stop offset="0.83" stop-color="#7b6c5f"/><stop offset="0.94" stop-color="#5f5148"/><stop offset="1.00" stop-color="#4b4038"/></linearGradient>
<linearGradient id="m39" x1="0" y1="0" x2="1" y2="0"><stop offset="0.00" stop-color="#8c7b6e"/><stop offset="0.05" stop-color="#a08d7f"/><stop offset="0.14" stop-color="#c1ab9c"/><stop offset="0.25" stop-color="#e1cbbb"/><stop offset="0.34" stop-color="#f3dfcd"/><stop offset="0.41" stop-color="#f1ddcb"/><stop offset="0.50" stop-color="#d7c1af"/><stop offset="0.60" stop-color="#b19d8f"/><stop offset="0.71" stop-color="#8f7d70"/><stop offset="0.83" stop-color="#716357"/><stop offset="0.94" stop-color="#574b42"/><stop offset="1.00" stop-color="#453b33"/></linearGradient>
<linearGradient id="m38" x1="0" y1="0" x2="1" y2="0"><stop offset="0.00" stop-color="#8b796d"/><stop offset="0.05" stop-color="#9e8b7e"/><stop offset="0.14" stop-color="#bea99a"/><stop offset="0.25" stop-color="#dec8b9"/><stop offset="0.34" stop-color="#f0dccb"/><stop offset="0.41" stop-color="#eedac9"/><stop offset="0.50" stop-color="#d4bead"/><stop offset="0.60" stop-color="#ae9b8e"/><stop offset="0.71" stop-color="#8d7b6f"/><stop offset="0.83" stop-color="#6f6156"/><stop offset="0.94" stop-color="#564a41"/><stop offset="1.00" stop-color="#443a33"/></linearGradient>
<linearGradient id="m37" x1="0" y1="0" x2="1" y2="0"><stop offset="0.00" stop-color="#89786c"/><stop offset="0.05" stop-color="#9c897c"/><stop offset="0.14" stop-color="#bca698"/><stop offset="0.25" stop-color="#dbc6b6"/><stop offset="0.34" stop-color="#edd9c8"/><stop offset="0.41" stop-color="#ebd7c6"/><stop offset="0.50" stop-color="#d1bcab"/><stop offset="0.60" stop-color="#ac998c"/><stop offset="0.71" stop-color="#8b7a6e"/><stop offset="0.83" stop-color="#6e6055"/><stop offset="0.94" stop-color="#554940"/><stop offset="1.00" stop-color="#433932"/></linearGradient>
<linearGradient id="m30" x1="0" y1="0" x2="1" y2="0"><stop offset="0.00" stop-color="#7c6c61"/><stop offset="0.05" stop-color="#8e7c70"/><stop offset="0.14" stop-color="#aa978a"/><stop offset="0.25" stop-color="#c7b3a5"/><stop offset="0.34" stop-color="#d7c5b5"/><stop offset="0.41" stop-color="#d5c3b4"/><stop offset="0.50" stop-color="#beaa9b"/><stop offset="0.60" stop-color="#9c8a7f"/><stop offset="0.71" stop-color="#7e6e63"/><stop offset="0.83" stop-color="#64574d"/><stop offset="0.94" stop-color="#4d423a"/><stop offset="1.00" stop-color="#3d342d"/></linearGradient>
<linearGradient id="m17" x1="0" y1="0" x2="1" y2="0"><stop offset="0.00" stop-color="#64584f"/><stop offset="0.05" stop-color="#73655b"/><stop offset="0.14" stop-color="#897a6f"/><stop offset="0.25" stop-color="#a19185"/><stop offset="0.34" stop-color="#ae9f93"/><stop offset="0.41" stop-color="#ac9e91"/><stop offset="0.50" stop-color="#998a7d"/><stop offset="0.60" stop-color="#7e7066"/><stop offset="0.71" stop-color="#665950"/><stop offset="0.83" stop-color="#51463e"/><stop offset="0.94" stop-color="#3e352f"/><stop offset="1.00" stop-color="#312a25"/></linearGradient>
<linearGradient id="m9" x1="0" y1="0" x2="1" y2="0"><stop offset="0.00" stop-color="#564b43"/><stop offset="0.05" stop-color="#62564e"/><stop offset="0.14" stop-color="#75685f"/><stop offset="0.25" stop-color="#897c72"/><stop offset="0.34" stop-color="#94887d"/><stop offset="0.41" stop-color="#93877c"/><stop offset="0.50" stop-color="#83766b"/><stop offset="0.60" stop-color="#6c6057"/><stop offset="0.71" stop-color="#574c45"/><stop offset="0.83" stop-color="#453c35"/><stop offset="0.94" stop-color="#352d28"/><stop offset="1.00" stop-color="#2a241f"/></linearGradient>
<linearGradient id="m6" x1="0" y1="0" x2="1" y2="0"><stop offset="0.00" stop-color="#50463f"/><stop offset="0.05" stop-color="#5c5049"/><stop offset="0.14" stop-color="#6e6259"/><stop offset="0.25" stop-color="#80746b"/><stop offset="0.34" stop-color="#8b7f75"/><stop offset="0.41" stop-color="#8a7e74"/><stop offset="0.50" stop-color="#7b6e64"/><stop offset="0.60" stop-color="#655a52"/><stop offset="0.71" stop-color="#514740"/><stop offset="0.83" stop-color="#403832"/><stop offset="0.94" stop-color="#322b26"/><stop offset="1.00" stop-color="#27211d"/></linearGradient>
<linearGradient id="m7" x1="0" y1="0" x2="1" y2="0"><stop offset="0.00" stop-color="#524840"/><stop offset="0.05" stop-color="#5e524a"/><stop offset="0.14" stop-color="#70645b"/><stop offset="0.25" stop-color="#83766d"/><stop offset="0.34" stop-color="#8e8278"/><stop offset="0.41" stop-color="#8d8177"/><stop offset="0.50" stop-color="#7d7166"/><stop offset="0.60" stop-color="#675c54"/><stop offset="0.71" stop-color="#534942"/><stop offset="0.83" stop-color="#423a33"/><stop offset="0.94" stop-color="#332c27"/><stop offset="1.00" stop-color="#28221e"/></linearGradient>
<linearGradient id="m18" x1="0" y1="0" x2="1" y2="0"><stop offset="0.00" stop-color="#665950"/><stop offset="0.05" stop-color="#75665c"/><stop offset="0.14" stop-color="#8c7c71"/><stop offset="0.25" stop-color="#a49388"/><stop offset="0.34" stop-color="#b1a295"/><stop offset="0.41" stop-color="#afa094"/><stop offset="0.50" stop-color="#9c8c7f"/><stop offset="0.60" stop-color="#807268"/><stop offset="0.71" stop-color="#685b52"/><stop offset="0.83" stop-color="#524840"/><stop offset="0.94" stop-color="#3f3630"/><stop offset="1.00" stop-color="#322b25"/></linearGradient>
<linearGradient id="m35" x1="0" y1="0" x2="1" y2="0"><stop offset="0.00" stop-color="#857469"/><stop offset="0.05" stop-color="#988679"/><stop offset="0.14" stop-color="#b7a294"/><stop offset="0.25" stop-color="#d5c0b1"/><stop offset="0.34" stop-color="#e7d3c3"/><stop offset="0.41" stop-color="#e5d1c1"/><stop offset="0.50" stop-color="#ccb7a6"/><stop offset="0.60" stop-color="#a79588"/><stop offset="0.71" stop-color="#87766b"/><stop offset="0.83" stop-color="#6b5d53"/><stop offset="0.94" stop-color="#52473f"/><stop offset="1.00" stop-color="#413731"/></linearGradient>
<linearGradient id="m45" x1="0" y1="0" x2="1" y2="0"><stop offset="0.00" stop-color="#978477"/><stop offset="0.05" stop-color="#ad9889"/><stop offset="0.14" stop-color="#d0b8a8"/><stop offset="0.25" stop-color="#f2dbca"/><stop offset="0.34" stop-color="#fff0de"/><stop offset="0.41" stop-color="#ffeedb"/><stop offset="0.50" stop-color="#e7d0bd"/><stop offset="0.60" stop-color="#bea99b"/><stop offset="0.71" stop-color="#9a8779"/><stop offset="0.83" stop-color="#7a6a5e"/><stop offset="0.94" stop-color="#5e5047"/><stop offset="1.00" stop-color="#4a3f38"/></linearGradient>
<linearGradient id="m44" x1="0" y1="0" x2="1" y2="0"><stop offset="0.00" stop-color="#968376"/><stop offset="0.05" stop-color="#ab9687"/><stop offset="0.14" stop-color="#cdb6a6"/><stop offset="0.25" stop-color="#f0d8c7"/><stop offset="0.34" stop-color="#ffeddb"/><stop offset="0.41" stop-color="#ffebd9"/><stop offset="0.50" stop-color="#e5cdbb"/><stop offset="0.60" stop-color="#bca799"/><stop offset="0.71" stop-color="#988578"/><stop offset="0.83" stop-color="#78695d"/><stop offset="0.94" stop-color="#5c4f47"/><stop offset="1.00" stop-color="#493e37"/></linearGradient>
<linearGradient id="m43" x1="0" y1="0" x2="1" y2="0"><stop offset="0.00" stop-color="#948174"/><stop offset="0.05" stop-color="#a99486"/><stop offset="0.14" stop-color="#cbb4a4"/><stop offset="0.25" stop-color="#edd5c5"/><stop offset="0.34" stop-color="#ffead8"/><stop offset="0.41" stop-color="#fee8d6"/><stop offset="0.50" stop-color="#e2cbb8"/><stop offset="0.60" stop-color="#baa597"/><stop offset="0.71" stop-color="#968376"/><stop offset="0.83" stop-color="#77685c"/><stop offset="0.94" stop-color="#5b4e46"/><stop offset="1.00" stop-color="#483e36"/></linearGradient>
<linearGradient id="m41" x1="0" y1="0" x2="1" y2="0"><stop offset="0.00" stop-color="#907e71"/><stop offset="0.05" stop-color="#a59182"/><stop offset="0.14" stop-color="#c6afa0"/><stop offset="0.25" stop-color="#e7d0c0"/><stop offset="0.34" stop-color="#fae4d3"/><stop offset="0.41" stop-color="#f8e2d1"/><stop offset="0.50" stop-color="#dcc6b4"/><stop offset="0.60" stop-color="#b5a193"/><stop offset="0.71" stop-color="#928073"/><stop offset="0.83" stop-color="#74655a"/><stop offset="0.94" stop-color="#594d44"/><stop offset="1.00" stop-color="#473c35"/></linearGradient>
<linearGradient id="m40" x1="0" y1="0" x2="1" y2="0"><stop offset="0.00" stop-color="#8e7c70"/><stop offset="0.05" stop-color="#a38f81"/><stop offset="0.14" stop-color="#c3ad9e"/><stop offset="0.25" stop-color="#e4cdbd"/><stop offset="0.34" stop-color="#f7e2d0"/><stop offset="0.41" stop-color="#f5e0ce"/><stop offset="0.50" stop-color="#dac3b1"/><stop offset="0.60" stop-color="#b39f91"/><stop offset="0.71" stop-color="#907e72"/><stop offset="0.83" stop-color="#726459"/><stop offset="0.94" stop-color="#584c43"/><stop offset="1.00" stop-color="#463b34"/></linearGradient>
<linearGradient id="m36" x1="0" y1="0" x2="1" y2="0"><stop offset="0.00" stop-color="#87766a"/><stop offset="0.05" stop-color="#9a877a"/><stop offset="0.14" stop-color="#b9a496"/><stop offset="0.25" stop-color="#d8c3b4"/><stop offset="0.34" stop-color="#ead6c5"/><stop offset="0.41" stop-color="#e8d4c4"/><stop offset="0.50" stop-color="#ceb9a8"/><stop offset="0.60" stop-color="#aa978a"/><stop offset="0.71" stop-color="#89786c"/><stop offset="0.83" stop-color="#6c5f54"/><stop offset="0.94" stop-color="#534840"/><stop offset="1.00" stop-color="#423831"/></linearGradient>
<linearGradient id="m33" x1="0" y1="0" x2="1" y2="0"><stop offset="0.00" stop-color="#827166"/><stop offset="0.05" stop-color="#948275"/><stop offset="0.14" stop-color="#b19e90"/><stop offset="0.25" stop-color="#cfbbac"/><stop offset="0.34" stop-color="#e0cdbd"/><stop offset="0.41" stop-color="#dfcbbc"/><stop offset="0.50" stop-color="#c6b2a2"/><stop offset="0.60" stop-color="#a39184"/><stop offset="0.71" stop-color="#837368"/><stop offset="0.83" stop-color="#685b51"/><stop offset="0.94" stop-color="#50453d"/><stop offset="1.00" stop-color="#40362f"/></linearGradient>
<linearGradient id="m32" x1="0" y1="0" x2="1" y2="0"><stop offset="0.00" stop-color="#807064"/><stop offset="0.05" stop-color="#928074"/><stop offset="0.14" stop-color="#af9b8e"/><stop offset="0.25" stop-color="#ccb8aa"/><stop offset="0.34" stop-color="#ddcabb"/><stop offset="0.41" stop-color="#dbc9b9"/><stop offset="0.50" stop-color="#c3af9f"/><stop offset="0.60" stop-color="#a18f82"/><stop offset="0.71" stop-color="#827166"/><stop offset="0.83" stop-color="#665a4f"/><stop offset="0.94" stop-color="#4f443c"/><stop offset="1.00" stop-color="#3f352f"/></linearGradient>
<linearGradient id="m29" x1="0" y1="0" x2="1" y2="0"><stop offset="0.00" stop-color="#7a6b60"/><stop offset="0.05" stop-color="#8c7b6f"/><stop offset="0.14" stop-color="#a79588"/><stop offset="0.25" stop-color="#c4b0a3"/><stop offset="0.34" stop-color="#d4c2b3"/><stop offset="0.41" stop-color="#d2c0b1"/><stop offset="0.50" stop-color="#bba898"/><stop offset="0.60" stop-color="#9a887d"/><stop offset="0.71" stop-color="#7c6d62"/><stop offset="0.83" stop-color="#62564c"/><stop offset="0.94" stop-color="#4c413a"/><stop offset="1.00" stop-color="#3c332d"/></linearGradient>
<linearGradient id="m27" x1="0" y1="0" x2="1" y2="0"><stop offset="0.00" stop-color="#77685d"/><stop offset="0.05" stop-color="#87776b"/><stop offset="0.14" stop-color="#a29084"/><stop offset="0.25" stop-color="#beab9e"/><stop offset="0.34" stop-color="#cdbcad"/><stop offset="0.41" stop-color="#ccbaac"/><stop offset="0.50" stop-color="#b5a394"/><stop offset="0.60" stop-color="#958479"/><stop offset="0.71" stop-color="#78695f"/><stop offset="0.83" stop-color="#5f534a"/><stop offset="0.94" stop-color="#493f38"/><stop offset="1.00" stop-color="#3a312b"/></linearGradient>
<linearGradient id="m24" x1="0" y1="0" x2="1" y2="0"><stop offset="0.00" stop-color="#716359"/><stop offset="0.05" stop-color="#817166"/><stop offset="0.14" stop-color="#9b8a7e"/><stop offset="0.25" stop-color="#b5a396"/><stop offset="0.34" stop-color="#c4b3a5"/><stop offset="0.41" stop-color="#c2b2a4"/><stop offset="0.50" stop-color="#ad9b8d"/><stop offset="0.60" stop-color="#8e7e73"/><stop offset="0.71" stop-color="#73645b"/><stop offset="0.83" stop-color="#5b4f46"/><stop offset="0.94" stop-color="#463c35"/><stop offset="1.00" stop-color="#372f29"/></linearGradient>
<linearGradient id="m19" x1="0" y1="0" x2="1" y2="0"><stop offset="0.00" stop-color="#685b52"/><stop offset="0.05" stop-color="#77685e"/><stop offset="0.14" stop-color="#8e7e74"/><stop offset="0.25" stop-color="#a6968a"/><stop offset="0.34" stop-color="#b4a598"/><stop offset="0.41" stop-color="#b3a397"/><stop offset="0.50" stop-color="#9f8f82"/><stop offset="0.60" stop-color="#83746a"/><stop offset="0.71" stop-color="#695c53"/><stop offset="0.83" stop-color="#534941"/><stop offset="0.94" stop-color="#403731"/><stop offset="1.00" stop-color="#332b26"/></linearGradient>
<linearGradient id="m11" x1="0" y1="0" x2="1" y2="0"><stop offset="0.00" stop-color="#594e46"/><stop offset="0.05" stop-color="#665a51"/><stop offset="0.14" stop-color="#7a6d63"/><stop offset="0.25" stop-color="#8f8177"/><stop offset="0.34" stop-color="#9b8e83"/><stop offset="0.41" stop-color="#9a8c81"/><stop offset="0.50" stop-color="#897b6f"/><stop offset="0.60" stop-color="#70645b"/><stop offset="0.71" stop-color="#5b4f48"/><stop offset="0.83" stop-color="#483f38"/><stop offset="0.94" stop-color="#372f2a"/><stop offset="1.00" stop-color="#2c2521"/></linearGradient>
<linearGradient id="m4" x1="0" y1="0" x2="1" y2="0"><stop offset="0.00" stop-color="#4d433c"/><stop offset="0.05" stop-color="#574d45"/><stop offset="0.14" stop-color="#695d55"/><stop offset="0.25" stop-color="#7b6f66"/><stop offset="0.34" stop-color="#857970"/><stop offset="0.41" stop-color="#84786f"/><stop offset="0.50" stop-color="#75695f"/><stop offset="0.60" stop-color="#60554e"/><stop offset="0.71" stop-color="#4e443d"/><stop offset="0.83" stop-color="#3d3630"/><stop offset="0.94" stop-color="#2f2924"/><stop offset="1.00" stop-color="#26201c"/></linearGradient>
<linearGradient id="m3" x1="0" y1="0" x2="1" y2="0"><stop offset="0.00" stop-color="#4b413b"/><stop offset="0.05" stop-color="#554b44"/><stop offset="0.14" stop-color="#665b53"/><stop offset="0.25" stop-color="#786c63"/><stop offset="0.34" stop-color="#81766d"/><stop offset="0.41" stop-color="#80756c"/><stop offset="0.50" stop-color="#72675d"/><stop offset="0.60" stop-color="#5e534c"/><stop offset="0.71" stop-color="#4c423c"/><stop offset="0.83" stop-color="#3c342f"/><stop offset="0.94" stop-color="#2e2823"/><stop offset="1.00" stop-color="#251f1b"/></linearGradient>
<linearGradient id="m2" x1="0" y1="0" x2="1" y2="0"><stop offset="0.00" stop-color="#494039"/><stop offset="0.05" stop-color="#534942"/><stop offset="0.14" stop-color="#645951"/><stop offset="0.25" stop-color="#756961"/><stop offset="0.34" stop-color="#7e746b"/><stop offset="0.41" stop-color="#7d726a"/><stop offset="0.50" stop-color="#6f645b"/><stop offset="0.60" stop-color="#5c514a"/><stop offset="0.71" stop-color="#4a413a"/><stop offset="0.83" stop-color="#3b332d"/><stop offset="0.94" stop-color="#2d2722"/><stop offset="1.00" stop-color="#241e1b"/></linearGradient>
<linearGradient id="m1" x1="0" y1="0" x2="1" y2="0"><stop offset="0.00" stop-color="#473e38"/><stop offset="0.05" stop-color="#514740"/><stop offset="0.14" stop-color="#61564f"/><stop offset="0.25" stop-color="#72675f"/><stop offset="0.34" stop-color="#7b7168"/><stop offset="0.41" stop-color="#7a7067"/><stop offset="0.50" stop-color="#6d6259"/><stop offset="0.60" stop-color="#594f49"/><stop offset="0.71" stop-color="#483f39"/><stop offset="0.83" stop-color="#39322c"/><stop offset="0.94" stop-color="#2c2621"/><stop offset="1.00" stop-color="#231e1a"/></linearGradient>
<linearGradient id="m23" x1="0" y1="0" x2="1" y2="0"><stop offset="0.00" stop-color="#6f6157"/><stop offset="0.05" stop-color="#7f7065"/><stop offset="0.14" stop-color="#98877c"/><stop offset="0.25" stop-color="#b2a194"/><stop offset="0.34" stop-color="#c1b0a3"/><stop offset="0.41" stop-color="#bfafa1"/><stop offset="0.50" stop-color="#aa998b"/><stop offset="0.60" stop-color="#8c7c72"/><stop offset="0.71" stop-color="#716359"/><stop offset="0.83" stop-color="#594e45"/><stop offset="0.94" stop-color="#453b34"/><stop offset="1.00" stop-color="#372e29"/></linearGradient>
<linearGradient id="m13" x1="0" y1="0" x2="1" y2="0"><stop offset="0.00" stop-color="#5d5149"/><stop offset="0.05" stop-color="#6a5d54"/><stop offset="0.14" stop-color="#7f7167"/><stop offset="0.25" stop-color="#95867c"/><stop offset="0.34" stop-color="#a19388"/><stop offset="0.41" stop-color="#a09287"/><stop offset="0.50" stop-color="#8e8074"/><stop offset="0.60" stop-color="#75685f"/><stop offset="0.71" stop-color="#5e534a"/><stop offset="0.83" stop-color="#4b413a"/><stop offset="0.94" stop-color="#39312c"/><stop offset="1.00" stop-color="#2e2722"/></linearGradient>
<linearGradient id="m0" x1="0" y1="0" x2="1" y2="0"><stop offset="0.00" stop-color="#453d36"/><stop offset="0.05" stop-color="#4f453f"/><stop offset="0.14" stop-color="#5f544d"/><stop offset="0.25" stop-color="#6f645c"/><stop offset="0.34" stop-color="#786e65"/><stop offset="0.41" stop-color="#776d64"/><stop offset="0.50" stop-color="#6a5f56"/><stop offset="0.60" stop-color="#574d47"/><stop offset="0.71" stop-color="#463e37"/><stop offset="0.83" stop-color="#38312b"/><stop offset="0.94" stop-color="#2b2521"/><stop offset="1.00" stop-color="#221d19"/></linearGradient>
<linearGradient id="m31" x1="0" y1="0" x2="1" y2="0"><stop offset="0.00" stop-color="#7e6e63"/><stop offset="0.05" stop-color="#907e72"/><stop offset="0.14" stop-color="#ac998c"/><stop offset="0.25" stop-color="#cab6a8"/><stop offset="0.34" stop-color="#dac7b8"/><stop offset="0.41" stop-color="#d8c6b6"/><stop offset="0.50" stop-color="#c0ad9d"/><stop offset="0.60" stop-color="#9e8d80"/><stop offset="0.71" stop-color="#807065"/><stop offset="0.83" stop-color="#65584e"/><stop offset="0.94" stop-color="#4e433b"/><stop offset="1.00" stop-color="#3e342e"/></linearGradient>
<linearGradient id="m14" x1="0" y1="0" x2="1" y2="0"><stop offset="0.00" stop-color="#5f534b"/><stop offset="0.05" stop-color="#6c5f56"/><stop offset="0.14" stop-color="#827369"/><stop offset="0.25" stop-color="#98897e"/><stop offset="0.34" stop-color="#a4968b"/><stop offset="0.41" stop-color="#a39589"/><stop offset="0.50" stop-color="#918276"/><stop offset="0.60" stop-color="#776a61"/><stop offset="0.71" stop-color="#60544c"/><stop offset="0.83" stop-color="#4c433b"/><stop offset="0.94" stop-color="#3b322d"/><stop offset="1.00" stop-color="#2e2723"/></linearGradient>
<linearGradient id="m5" x1="0" y1="0" x2="1" y2="0"><stop offset="0.00" stop-color="#4e453e"/><stop offset="0.05" stop-color="#594f47"/><stop offset="0.14" stop-color="#6b5f57"/><stop offset="0.25" stop-color="#7d7168"/><stop offset="0.34" stop-color="#887c73"/><stop offset="0.41" stop-color="#877b71"/><stop offset="0.50" stop-color="#786c62"/><stop offset="0.60" stop-color="#635850"/><stop offset="0.71" stop-color="#50463f"/><stop offset="0.83" stop-color="#3f3731"/><stop offset="0.94" stop-color="#302a25"/><stop offset="1.00" stop-color="#26211d"/></linearGradient>
<linearGradient id="m22" x1="0" y1="0" x2="1" y2="0"><stop offset="0.00" stop-color="#6d6056"/><stop offset="0.05" stop-color="#7d6e63"/><stop offset="0.14" stop-color="#96857a"/><stop offset="0.25" stop-color="#af9e92"/><stop offset="0.34" stop-color="#beada0"/><stop offset="0.41" stop-color="#bcac9e"/><stop offset="0.50" stop-color="#a79688"/><stop offset="0.60" stop-color="#8a7a70"/><stop offset="0.71" stop-color="#6f6158"/><stop offset="0.83" stop-color="#584d44"/><stop offset="0.94" stop-color="#443a34"/><stop offset="1.00" stop-color="#362e28"/></linearGradient>
<linearGradient id="m25" x1="0" y1="0" x2="1" y2="0"><stop offset="0.00" stop-color="#73645a"/><stop offset="0.05" stop-color="#837368"/><stop offset="0.14" stop-color="#9d8c80"/><stop offset="0.25" stop-color="#b8a699"/><stop offset="0.34" stop-color="#c7b6a8"/><stop offset="0.41" stop-color="#c5b4a6"/><stop offset="0.50" stop-color="#b09e8f"/><stop offset="0.60" stop-color="#908075"/><stop offset="0.71" stop-color="#75665c"/><stop offset="0.83" stop-color="#5c5148"/><stop offset="0.94" stop-color="#473d36"/><stop offset="1.00" stop-color="#38302a"/></linearGradient>
<linearGradient id="m28" x1="0" y1="0" x2="1" y2="0"><stop offset="0.00" stop-color="#78695f"/><stop offset="0.05" stop-color="#89796d"/><stop offset="0.14" stop-color="#a59286"/><stop offset="0.25" stop-color="#c1aea0"/><stop offset="0.34" stop-color="#d1bfb0"/><stop offset="0.41" stop-color="#cfbdae"/><stop offset="0.50" stop-color="#b8a596"/><stop offset="0.60" stop-color="#97867b"/><stop offset="0.71" stop-color="#7a6b60"/><stop offset="0.83" stop-color="#61544b"/><stop offset="0.94" stop-color="#4a4039"/><stop offset="1.00" stop-color="#3b322c"/></linearGradient>
<linearGradient id="m34" x1="0" y1="0" x2="1" y2="0"><stop offset="0.00" stop-color="#837367"/><stop offset="0.05" stop-color="#968477"/><stop offset="0.14" stop-color="#b4a092"/><stop offset="0.25" stop-color="#d2beaf"/><stop offset="0.34" stop-color="#e4d0c0"/><stop offset="0.41" stop-color="#e2cebe"/><stop offset="0.50" stop-color="#c9b4a4"/><stop offset="0.60" stop-color="#a59386"/><stop offset="0.71" stop-color="#857569"/><stop offset="0.83" stop-color="#695c52"/><stop offset="0.94" stop-color="#51463e"/><stop offset="1.00" stop-color="#403730"/></linearGradient>
<linearGradient id="m42" x1="0" y1="0" x2="1" y2="0"><stop offset="0.00" stop-color="#928073"/><stop offset="0.05" stop-color="#a79284"/><stop offset="0.14" stop-color="#c8b2a2"/><stop offset="0.25" stop-color="#ead3c2"/><stop offset="0.34" stop-color="#fde7d5"/><stop offset="0.41" stop-color="#fbe5d3"/><stop offset="0.50" stop-color="#dfc8b6"/><stop offset="0.60" stop-color="#b8a395"/><stop offset="0.71" stop-color="#948275"/><stop offset="0.83" stop-color="#75665b"/><stop offset="0.94" stop-color="#5a4d45"/><stop offset="1.00" stop-color="#483d35"/></linearGradient>
<linearGradient id="m10" x1="0" y1="0" x2="1" y2="0"><stop offset="0.00" stop-color="#584c45"/><stop offset="0.05" stop-color="#64584f"/><stop offset="0.14" stop-color="#786a61"/><stop offset="0.25" stop-color="#8c7e74"/><stop offset="0.34" stop-color="#988b80"/><stop offset="0.41" stop-color="#96897f"/><stop offset="0.50" stop-color="#86786d"/><stop offset="0.60" stop-color="#6e6259"/><stop offset="0.71" stop-color="#594e46"/><stop offset="0.83" stop-color="#463d36"/><stop offset="0.94" stop-color="#362e29"/><stop offset="1.00" stop-color="#2b2420"/></linearGradient>
</defs>
<path d="M1170.4 169.2 C1171.0 168.2 1172.1 164.5 1174.0 163.2 C1175.9 161.9 1179.3 161.8 1182.0 161.6 C1184.7 161.4 1187.3 161.6 1190.0 162.0 C1192.7 162.4 1195.3 162.9 1198.0 164.0 C1200.7 165.1 1203.3 166.7 1206.0 168.4 C1208.7 170.1 1212.5 172.4 1214.0 174.0 C1215.5 175.6 1215.0 176.3 1214.7 178.0 C1214.4 179.7 1213.5 182.4 1212.4 184.4 C1211.4 186.4 1209.9 188.3 1208.4 190.0 C1206.9 191.7 1204.7 193.2 1203.6 194.8 C1202.5 196.4 1202.1 197.7 1202.0 199.6 C1201.9 201.5 1202.3 204.1 1202.8 206.0 C1203.3 207.9 1204.8 210.0 1205.2 210.8 C1209.5 213.4 1223.4 220.3 1231.0 226.6 C1238.6 232.9 1245.6 241.3 1250.8 248.7 C1256.0 256.1 1260.0 264.9 1262.0 270.8 C1264.0 276.7 1263.2 278.8 1263.0 284.0 C1262.8 289.2 1263.0 295.9 1260.8 301.8 C1258.6 307.7 1253.2 315.4 1250.0 319.2 C1246.8 323.0 1244.3 322.9 1241.4 324.8 C1238.5 326.8 1234.2 329.9 1232.8 330.9 C1232.4 331.5 1230.9 333.0 1230.3 334.6 C1229.7 336.2 1230.0 339.0 1229.0 340.8 C1228.0 342.6 1226.7 344.4 1224.2 345.7 C1221.8 347.0 1216.0 348.3 1214.3 348.8 C1214.9 350.1 1217.3 354.5 1218.0 356.8 C1218.7 359.1 1219.0 360.9 1218.6 362.9 C1218.2 364.9 1217.2 367.1 1215.5 369.0 C1213.8 370.9 1209.4 373.2 1208.2 374.0 C1206.8 375.2 1202.2 378.5 1199.5 381.4 C1196.8 384.3 1194.7 386.4 1192.2 391.2 C1189.8 396.0 1187.2 401.9 1184.8 410.0 C1182.3 418.1 1179.4 429.9 1177.5 440.0 C1175.6 450.1 1174.5 459.7 1173.5 470.5 C1172.5 481.3 1171.7 494.2 1171.8 505.0 C1171.9 515.8 1172.8 526.2 1174.0 535.0 C1175.2 543.8 1177.8 553.3 1178.7 558.0 C1179.6 562.7 1179.4 562.5 1179.6 563.4 L1161.0 577.0 C1161.8 577.8 1164.5 579.8 1166.0 582.0 C1167.5 584.2 1169.2 587.6 1170.0 590.0 C1170.8 592.4 1171.3 593.9 1171.0 596.6 C1170.7 599.3 1169.8 603.4 1168.0 606.0 C1166.2 608.6 1163.0 610.8 1160.0 612.5 C1157.0 614.2 1151.7 615.7 1150.0 616.3 C1151.0 617.5 1154.3 620.8 1156.0 623.7 C1157.7 626.6 1159.3 631.9 1160.0 633.5 L1137.8 709.8 C1136.0 710.4 1134.3 713.1 1126.7 713.5 C1119.1 713.9 1108.0 714.5 1092.0 712.2 C1076.0 710.0 1049.1 704.9 1030.7 700.0 C1012.3 695.1 995.0 688.9 981.5 682.7 C968.0 676.5 956.5 669.1 949.5 663.0 C942.5 656.9 941.3 648.7 939.7 645.8 C942.6 636.5 953.2 601.9 956.8 590.0 C960.4 578.1 960.7 577.2 961.5 574.7 C962.5 573.7 964.5 570.3 967.6 568.6 C970.8 566.9 978.3 565.3 980.4 564.6 C979.3 563.4 975.4 559.9 973.7 557.1 C972.0 554.3 970.4 551.1 970.3 547.7 C970.2 544.3 971.2 540.0 973.0 536.8 C974.8 533.6 977.7 530.6 981.1 528.7 C984.5 526.8 991.3 525.9 993.3 525.3 C992.2 523.7 988.2 518.9 986.5 515.9 C984.8 512.9 983.7 509.1 983.2 507.0 C982.8 504.9 983.7 503.7 983.8 503.0 C985.6 501.6 990.3 497.8 994.4 494.6 C998.5 491.4 1003.6 487.8 1008.2 484.0 C1012.8 480.2 1017.4 477.2 1022.0 472.0 C1026.6 466.8 1032.0 459.0 1036.0 453.0 C1040.0 447.0 1042.8 442.8 1046.0 436.0 C1049.2 429.2 1052.1 420.6 1055.0 412.0 C1057.9 403.4 1061.0 391.7 1063.3 384.4 C1065.6 377.1 1067.7 374.6 1068.8 368.0 C1069.9 361.4 1070.1 351.1 1069.9 345.0 C1069.7 338.9 1068.1 333.9 1067.7 331.7 C1067.1 330.2 1064.3 325.4 1063.9 322.8 C1063.5 320.2 1064.3 318.3 1065.5 316.2 C1066.7 314.1 1068.8 311.5 1071.0 310.0 C1073.2 308.5 1077.4 307.8 1078.7 307.3 C1077.8 306.6 1074.7 305.1 1073.2 302.9 C1071.7 300.7 1070.1 296.9 1069.9 294.0 C1069.7 291.1 1071.7 286.7 1072.1 285.2 C1071.2 283.7 1068.1 280.4 1066.6 276.3 C1065.1 272.2 1063.4 266.7 1063.2 260.8 C1063.0 254.9 1063.5 247.6 1065.5 241.0 C1067.5 234.4 1070.4 226.9 1075.4 221.0 C1080.4 215.1 1086.8 209.6 1095.3 205.5 C1103.8 201.4 1117.2 197.9 1126.3 196.6 C1135.4 195.3 1143.7 197.5 1150.0 197.5 C1156.3 197.5 1162.0 196.6 1164.4 196.4 C1165.5 195.6 1169.3 193.5 1170.8 191.6 C1172.3 189.7 1173.5 187.1 1173.6 185.2 C1173.7 183.3 1172.3 182.3 1171.6 180.4 C1170.9 178.5 1169.4 175.9 1169.2 174.0 C1169.0 172.1 1170.2 170.0 1170.4 169.2Z" fill="none" stroke="#f6f4f2" stroke-opacity="0.8" stroke-width="3"/>
<g clip-path="url(#sil)"><g transform="rotate(17.00)">
<path d="M1181.7 -193.5Q1190.7 -198.1 1199.8 -193.5L1199.8 -189.9Q1190.7 -194.5 1181.7 -189.9Z" fill="url(#m47)"/>
<path d="M1175.2 -191.5Q1191.3 -200.0 1207.4 -191.5L1207.4 -187.9Q1191.3 -196.4 1175.2 -187.9Z" fill="url(#m47)"/>
<path d="M1171.0 -189.5Q1191.9 -200.6 1212.9 -189.5L1212.9 -185.9Q1191.9 -197.0 1171.0 -185.9Z" fill="url(#m47)"/>
<path d="M1169.0 -187.5Q1191.7 -199.6 1214.5 -187.5L1214.5 -183.9Q1191.7 -196.0 1169.0 -183.9Z" fill="url(#m47)"/>
<path d="M1168.3 -185.5Q1191.5 -197.8 1214.7 -185.5L1214.7 -181.9Q1191.5 -194.2 1168.3 -181.9Z" fill="url(#m46)"/>
<path d="M1168.0 -183.5Q1191.4 -195.8 1214.8 -183.5L1214.8 -179.9Q1191.4 -192.2 1168.0 -179.9Z" fill="url(#m39)"/>
<path d="M1167.8 -181.5Q1191.2 -193.8 1214.7 -181.5L1214.7 -177.9Q1191.2 -190.2 1167.8 -177.9Z" fill="url(#m38)"/>
<path d="M1167.6 -179.5Q1191.0 -191.7 1214.4 -179.5L1214.4 -175.9Q1191.0 -188.1 1167.6 -175.9Z" fill="url(#m37)"/>
<path d="M1167.7 -177.5Q1190.8 -189.5 1214.0 -177.5L1214.0 -173.9Q1190.8 -185.9 1167.7 -173.9Z" fill="url(#m30)"/>
<path d="M1168.5 -175.5Q1190.9 -187.1 1213.3 -175.5L1213.3 -171.9Q1190.9 -183.5 1168.5 -171.9Z" fill="url(#m17)"/>
<path d="M1170.0 -173.5Q1191.3 -184.4 1212.5 -173.5L1212.5 -169.9Q1191.3 -180.8 1170.0 -169.9Z" fill="url(#m9)"/>
<path d="M1171.7 -171.5Q1191.7 -181.6 1211.6 -171.5L1211.6 -167.9Q1191.7 -178.0 1171.7 -167.9Z" fill="url(#m6)"/>
<path d="M1173.7 -169.5Q1192.1 -178.8 1210.4 -169.5L1210.4 -165.9Q1192.1 -175.2 1173.7 -165.9Z" fill="url(#m7)"/>
<path d="M1175.3 -167.5Q1192.3 -176.0 1209.3 -167.5L1209.3 -163.9Q1192.3 -172.4 1175.3 -163.9Z" fill="url(#m18)"/>
<path d="M1175.6 -165.5Q1192.2 -173.7 1208.7 -165.5L1208.7 -161.9Q1192.2 -170.1 1175.6 -161.9Z" fill="url(#m35)"/>
<path d="M1175.5 -163.5Q1192.0 -171.6 1208.5 -163.5L1208.5 -159.9Q1192.0 -168.0 1175.5 -159.9Z" fill="url(#m39)"/>
<path d="M1175.1 -161.5Q1192.0 -169.8 1208.8 -161.5L1208.8 -157.9Q1192.0 -166.2 1175.1 -157.9Z" fill="url(#m46)"/>
<path d="M1174.4 -159.5Q1191.9 -168.1 1209.5 -159.5L1209.5 -155.9Q1191.9 -164.5 1174.4 -155.9Z" fill="url(#m47)"/>
<path d="M1173.1 -157.5Q1191.8 -166.6 1210.4 -157.5L1210.4 -153.9Q1191.8 -163.0 1173.1 -153.9Z" fill="url(#m47)"/>
<path d="M1171.5 -155.5Q1191.5 -165.3 1211.6 -155.5L1211.6 -151.9Q1191.5 -161.7 1171.5 -151.9Z" fill="url(#m47)"/>
<path d="M1169.7 -153.5Q1191.5 -164.1 1213.3 -153.5L1213.3 -149.9Q1191.5 -160.5 1169.7 -149.9Z" fill="url(#m47)"/>
<path d="M1165.0 -151.5Q1190.6 -164.0 1216.3 -151.5L1216.3 -147.9Q1190.6 -160.4 1165.0 -147.9Z" fill="url(#m47)"/>
<path d="M1159.9 -149.5Q1192.8 -165.6 1225.6 -149.5L1225.6 -145.9Q1192.8 -162.0 1159.9 -145.9Z" fill="url(#m47)"/>
<path d="M1153.2 -147.5Q1193.6 -167.3 1234.1 -147.5L1234.1 -143.9Q1193.6 -163.7 1153.2 -143.9Z" fill="url(#m47)"/>
<path d="M1143.2 -145.5Q1192.1 -169.4 1241.0 -145.5L1241.0 -141.9Q1192.1 -165.8 1143.2 -141.9Z" fill="url(#m47)"/>
<path d="M1136.5 -143.5Q1191.3 -170.2 1246.0 -143.5L1246.0 -139.9Q1191.3 -166.6 1136.5 -139.9Z" fill="url(#m47)"/>
<path d="M1132.0 -141.5Q1191.1 -170.2 1250.2 -141.5L1250.2 -137.9Q1191.1 -166.6 1132.0 -137.9Z" fill="url(#m47)"/>
<path d="M1128.2 -139.5Q1191.1 -169.9 1253.9 -139.5L1253.9 -135.9Q1191.1 -166.3 1128.2 -135.9Z" fill="url(#m47)"/>
<path d="M1124.6 -137.5Q1191.0 -169.5 1257.4 -137.5L1257.4 -133.9Q1191.0 -165.9 1124.6 -133.9Z" fill="url(#m47)"/>
<path d="M1121.3 -135.5Q1190.9 -168.9 1260.5 -135.5L1260.5 -131.9Q1190.9 -165.3 1121.3 -131.9Z" fill="url(#m47)"/>
<path d="M1118.2 -133.5Q1190.8 -168.2 1263.5 -133.5L1263.5 -129.9Q1190.8 -164.6 1118.2 -129.9Z" fill="url(#m47)"/>
<path d="M1115.2 -131.5Q1190.8 -167.4 1266.3 -131.5L1266.3 -127.9Q1190.8 -163.8 1115.2 -127.9Z" fill="url(#m47)"/>
<path d="M1112.4 -129.5Q1190.7 -166.5 1269.0 -129.5L1269.0 -125.9Q1190.7 -162.9 1112.4 -125.9Z" fill="url(#m47)"/>
<path d="M1109.8 -127.5Q1190.7 -165.5 1271.5 -127.5L1271.5 -123.9Q1190.7 -161.9 1109.8 -123.9Z" fill="url(#m47)"/>
<path d="M1107.5 -125.5Q1190.6 -164.4 1273.8 -125.5L1273.8 -121.9Q1190.6 -160.8 1107.5 -121.9Z" fill="url(#m47)"/>
<path d="M1105.3 -123.5Q1190.6 -163.2 1276.0 -123.5L1276.0 -119.9Q1190.6 -159.6 1105.3 -119.9Z" fill="url(#m47)"/>
<path d="M1103.3 -121.5Q1190.7 -161.9 1278.0 -121.5L1278.0 -117.9Q1190.7 -158.3 1103.3 -117.9Z" fill="url(#m47)"/>
<path d="M1101.5 -119.5Q1190.7 -160.5 1279.9 -119.5L1279.9 -115.9Q1190.7 -156.9 1101.5 -115.9Z" fill="url(#m47)"/>
<path d="M1099.9 -117.5Q1190.8 -159.1 1281.8 -117.5L1281.8 -113.9Q1190.8 -155.5 1099.9 -113.9Z" fill="url(#m47)"/>
<path d="M1098.4 -115.5Q1191.0 -157.6 1283.5 -115.5L1283.5 -111.9Q1191.0 -154.0 1098.4 -111.9Z" fill="url(#m47)"/>
<path d="M1097.1 -113.5Q1191.1 -156.0 1285.1 -113.5L1285.1 -109.9Q1191.1 -152.4 1097.1 -109.9Z" fill="url(#m47)"/>
<path d="M1095.8 -111.5Q1191.2 -154.4 1286.6 -111.5L1286.6 -107.9Q1191.2 -150.8 1095.8 -107.9Z" fill="url(#m47)"/>
<path d="M1094.7 -109.5Q1191.4 -152.7 1288.0 -109.5L1288.0 -105.9Q1191.4 -149.1 1094.7 -105.9Z" fill="url(#m47)"/>
<path d="M1093.6 -107.5Q1191.4 -150.9 1289.2 -107.5L1289.2 -103.9Q1191.4 -147.3 1093.6 -103.9Z" fill="url(#m47)"/>
<path d="M1092.7 -105.5Q1191.4 -149.1 1290.1 -105.5L1290.1 -101.9Q1191.4 -145.5 1092.7 -101.9Z" fill="url(#m47)"/>
<path d="M1091.8 -103.5Q1191.3 -147.2 1290.7 -103.5L1290.7 -99.9Q1191.3 -143.6 1091.8 -99.9Z" fill="url(#m47)"/>
<path d="M1091.1 -101.5Q1191.1 -145.2 1291.2 -101.5L1291.2 -97.9Q1191.1 -141.6 1091.1 -97.9Z" fill="url(#m47)"/>
<path d="M1090.5 -99.5Q1191.0 -143.1 1291.6 -99.5L1291.6 -95.9Q1191.0 -139.5 1090.5 -95.9Z" fill="url(#m46)"/>
<path d="M1089.9 -97.5Q1191.0 -141.1 1292.2 -97.5L1292.2 -93.9Q1191.0 -137.5 1089.9 -93.9Z" fill="url(#m45)"/>
<path d="M1089.5 -95.5Q1191.1 -139.0 1292.7 -95.5L1292.7 -91.9Q1191.1 -135.4 1089.5 -91.9Z" fill="url(#m44)"/>
<path d="M1089.2 -93.5Q1191.2 -137.0 1293.2 -93.5L1293.2 -89.9Q1191.2 -133.4 1089.2 -89.9Z" fill="url(#m43)"/>
<path d="M1088.9 -91.5Q1191.3 -134.9 1293.7 -91.5L1293.7 -87.9Q1191.3 -131.3 1088.9 -87.9Z" fill="url(#m41)"/>
<path d="M1088.7 -89.5Q1191.4 -132.7 1294.2 -89.5L1294.2 -85.9Q1191.4 -129.1 1088.7 -85.9Z" fill="url(#m40)"/>
<path d="M1088.6 -87.5Q1191.5 -130.6 1294.5 -87.5L1294.5 -83.9Q1191.5 -127.0 1088.6 -83.9Z" fill="url(#m39)"/>
<path d="M1088.5 -85.5Q1191.6 -128.4 1294.8 -85.5L1294.8 -81.9Q1191.6 -124.8 1088.5 -81.9Z" fill="url(#m38)"/>
<path d="M1088.4 -83.5Q1191.7 -126.1 1295.0 -83.5L1295.0 -79.9Q1191.7 -122.5 1088.4 -79.9Z" fill="url(#m38)"/>
<path d="M1088.4 -81.5Q1191.7 -123.9 1295.0 -81.5L1295.0 -77.9Q1191.7 -120.3 1088.4 -77.9Z" fill="url(#m38)"/>
<path d="M1088.5 -79.5Q1191.6 -121.5 1294.8 -79.5L1294.8 -75.9Q1191.6 -117.9 1088.5 -75.9Z" fill="url(#m37)"/>
<path d="M1088.6 -77.5Q1191.6 -119.2 1294.5 -77.5L1294.5 -73.9Q1191.6 -115.6 1088.6 -73.9Z" fill="url(#m36)"/>
<path d="M1088.9 -75.5Q1191.5 -116.8 1294.2 -75.5L1294.2 -71.9Q1191.5 -113.2 1088.9 -71.9Z" fill="url(#m35)"/>
<path d="M1089.2 -73.5Q1191.4 -114.4 1293.7 -73.5L1293.7 -69.9Q1191.4 -110.8 1089.2 -69.9Z" fill="url(#m33)"/>
<path d="M1089.5 -71.5Q1191.4 -111.9 1293.2 -71.5L1293.2 -67.9Q1191.4 -108.3 1089.5 -67.9Z" fill="url(#m32)"/>
<path d="M1090.0 -69.5Q1191.3 -109.5 1292.6 -69.5L1292.6 -65.9Q1191.3 -105.9 1090.0 -65.9Z" fill="url(#m30)"/>
<path d="M1090.5 -67.5Q1191.2 -107.0 1292.0 -67.5L1292.0 -63.9Q1191.2 -103.4 1090.5 -63.9Z" fill="url(#m29)"/>
<path d="M1091.0 -65.5Q1191.2 -104.5 1291.4 -65.5L1291.4 -61.9Q1191.2 -100.9 1091.0 -61.9Z" fill="url(#m27)"/>
<path d="M1091.6 -63.5Q1191.1 -101.9 1290.6 -63.5L1290.6 -59.9Q1191.1 -98.3 1091.6 -59.9Z" fill="url(#m24)"/>
<path d="M1092.3 -61.5Q1191.1 -99.4 1289.8 -61.5L1289.8 -57.9Q1191.1 -95.8 1092.3 -57.9Z" fill="url(#m19)"/>
<path d="M1093.2 -59.5Q1191.0 -96.8 1288.9 -59.5L1288.9 -55.9Q1191.0 -93.2 1093.2 -55.9Z" fill="url(#m11)"/>
<path d="M1094.1 -57.5Q1190.8 -94.1 1287.4 -57.5L1287.4 -53.9Q1190.8 -90.5 1094.1 -53.9Z" fill="url(#m6)"/>
<path d="M1095.2 -55.5Q1190.2 -91.2 1285.3 -55.5L1285.3 -51.9Q1190.2 -87.6 1095.2 -51.9Z" fill="url(#m4)"/>
<path d="M1096.4 -53.5Q1189.8 -88.3 1283.3 -53.5L1283.3 -49.9Q1189.8 -84.7 1096.4 -49.9Z" fill="url(#m3)"/>
<path d="M1097.7 -51.5Q1189.7 -85.6 1281.7 -51.5L1281.7 -47.9Q1189.7 -82.0 1097.7 -47.9Z" fill="url(#m4)"/>
<path d="M1099.1 -49.5Q1189.6 -82.8 1280.1 -49.5L1280.1 -45.9Q1189.6 -79.2 1099.1 -45.9Z" fill="url(#m3)"/>
<path d="M1100.7 -47.5Q1189.6 -79.9 1278.6 -47.5L1278.6 -43.9Q1189.6 -76.3 1100.7 -43.9Z" fill="url(#m2)"/>
<path d="M1102.7 -45.5Q1189.9 -77.1 1277.1 -45.5L1277.1 -41.9Q1189.9 -73.5 1102.7 -41.9Z" fill="url(#m1)"/>
<path d="M1105.2 -43.5Q1190.7 -74.2 1276.1 -43.5L1276.1 -39.9Q1190.7 -70.6 1105.2 -39.9Z" fill="url(#m6)"/>
<path d="M1107.6 -41.5Q1191.6 -71.4 1275.5 -41.5L1275.5 -37.9Q1191.6 -67.8 1107.6 -37.9Z" fill="url(#m23)"/>
<path d="M1107.6 -39.5Q1191.5 -69.2 1275.4 -39.5L1275.4 -35.9Q1191.5 -65.6 1107.6 -35.9Z" fill="url(#m37)"/>
<path d="M1107.5 -37.5Q1191.7 -67.1 1275.8 -37.5L1275.8 -33.9Q1191.7 -63.5 1107.5 -33.9Z" fill="url(#m38)"/>
<path d="M1107.6 -35.5Q1191.8 -64.9 1276.0 -35.5L1276.0 -31.9Q1191.8 -61.3 1107.6 -31.9Z" fill="url(#m37)"/>
<path d="M1107.9 -33.5Q1191.8 -62.5 1275.7 -33.5L1275.7 -29.9Q1191.8 -58.9 1107.9 -29.9Z" fill="url(#m30)"/>
<path d="M1108.6 -31.5Q1191.8 -60.1 1275.0 -31.5L1275.0 -27.9Q1191.8 -56.5 1108.6 -27.9Z" fill="url(#m13)"/>
<path d="M1109.8 -29.5Q1191.8 -57.4 1273.8 -29.5L1273.8 -25.9Q1191.8 -53.8 1109.8 -25.9Z" fill="url(#m4)"/>
<path d="M1111.4 -27.5Q1191.6 -54.6 1271.9 -27.5L1271.9 -23.9Q1191.6 -51.0 1111.4 -23.9Z" fill="url(#m0)"/>
<path d="M1113.4 -25.5Q1191.2 -51.6 1269.1 -25.5L1269.1 -21.9Q1191.2 -48.0 1113.4 -21.9Z" fill="url(#m0)"/>
<path d="M1117.0 -23.5Q1191.4 -48.3 1265.9 -23.5L1265.9 -19.9Q1191.4 -44.7 1117.0 -19.9Z" fill="url(#m3)"/>
<path d="M1118.9 -21.5Q1192.0 -45.6 1265.1 -21.5L1265.1 -17.9Q1192.0 -42.0 1118.9 -17.9Z" fill="url(#m38)"/>
<path d="M1115.9 -19.5Q1191.4 -44.2 1267.0 -19.5L1267.0 -15.9Q1191.4 -40.6 1115.9 -15.9Z" fill="url(#m47)"/>
<path d="M1113.7 -17.5Q1191.3 -42.7 1268.8 -17.5L1268.8 -13.9Q1191.3 -39.1 1113.7 -13.9Z" fill="url(#m47)"/>
<path d="M1112.4 -15.5Q1191.4 -40.9 1270.3 -15.5L1270.3 -11.9Q1191.4 -37.3 1112.4 -11.9Z" fill="url(#m47)"/>
<path d="M1111.5 -13.5Q1191.5 -39.1 1271.5 -13.5L1271.5 -9.9Q1191.5 -35.5 1111.5 -9.9Z" fill="url(#m47)"/>
<path d="M1110.8 -11.5Q1191.5 -37.1 1272.2 -11.5L1272.2 -7.9Q1191.5 -33.5 1110.8 -7.9Z" fill="url(#m46)"/>
<path d="M1110.3 -9.5Q1191.4 -35.0 1272.5 -9.5L1272.5 -5.9Q1191.4 -31.4 1110.3 -5.9Z" fill="url(#m39)"/>
<path d="M1110.0 -7.5Q1191.2 -32.8 1272.4 -7.5L1272.4 -3.9Q1191.2 -29.2 1110.0 -3.9Z" fill="url(#m38)"/>
<path d="M1110.1 -5.5Q1191.1 -30.5 1272.0 -5.5L1272.0 -1.9Q1191.1 -26.9 1110.1 -1.9Z" fill="url(#m31)"/>
<path d="M1110.7 -3.5Q1191.0 -28.1 1271.3 -3.5L1271.3 0.1Q1191.0 -24.5 1110.7 0.1Z" fill="url(#m14)"/>
<path d="M1112.0 -1.5Q1191.0 -25.5 1270.0 -1.5L1270.0 2.1Q1191.0 -21.9 1112.0 2.1Z" fill="url(#m5)"/>
<path d="M1113.7 0.5Q1191.0 -22.8 1268.3 0.5L1268.3 4.1Q1191.0 -19.2 1113.7 4.1Z" fill="url(#m2)"/>
<path d="M1115.6 2.5Q1191.1 -20.0 1266.6 2.5L1266.6 6.1Q1191.1 -16.4 1115.6 6.1Z" fill="url(#m2)"/>
<path d="M1117.3 4.5Q1191.1 -17.3 1265.0 4.5L1265.0 8.1Q1191.1 -13.7 1117.3 8.1Z" fill="url(#m4)"/>
<path d="M1118.4 6.5Q1191.0 -14.8 1263.6 6.5L1263.6 10.1Q1191.0 -11.2 1118.4 10.1Z" fill="url(#m7)"/>
<path d="M1119.6 8.5Q1190.9 -12.2 1262.3 8.5L1262.3 12.1Q1190.9 -8.6 1119.6 12.1Z" fill="url(#m9)"/>
<path d="M1120.6 10.5Q1190.8 -9.7 1261.0 10.5L1261.0 14.1Q1190.8 -6.1 1120.6 14.1Z" fill="url(#m11)"/>
<path d="M1121.6 12.5Q1190.7 -7.2 1259.9 12.5L1259.9 16.1Q1190.7 -3.6 1121.6 16.1Z" fill="url(#m13)"/>
<path d="M1122.4 14.5Q1190.7 -4.8 1258.9 14.5L1258.9 18.1Q1190.7 -1.2 1122.4 18.1Z" fill="url(#m18)"/>
<path d="M1123.1 16.5Q1190.5 -2.3 1258.0 16.5L1258.0 20.1Q1190.5 1.3 1123.1 20.1Z" fill="url(#m22)"/>
<path d="M1123.8 18.5Q1190.5 0.1 1257.1 18.5L1257.1 22.1Q1190.5 3.7 1123.8 22.1Z" fill="url(#m25)"/>
<path d="M1124.4 20.5Q1190.4 2.4 1256.4 20.5L1256.4 24.1Q1190.4 6.0 1124.4 24.1Z" fill="url(#m28)"/>
<path d="M1125.0 22.5Q1190.5 4.7 1255.9 22.5L1255.9 26.1Q1190.5 8.3 1125.0 26.1Z" fill="url(#m30)"/>
<path d="M1125.6 24.5Q1190.5 7.0 1255.5 24.5L1255.5 28.1Q1190.5 10.6 1125.6 28.1Z" fill="url(#m32)"/>
<path d="M1126.1 26.5Q1190.6 9.3 1255.2 26.5L1255.2 30.1Q1190.6 12.9 1126.1 30.1Z" fill="url(#m33)"/>
<path d="M1126.6 28.5Q1190.8 11.6 1254.9 28.5L1254.9 32.1Q1190.8 15.2 1126.6 32.1Z" fill="url(#m34)"/>
<path d="M1127.1 30.5Q1190.9 13.9 1254.6 30.5L1254.6 34.1Q1190.9 17.5 1127.1 34.1Z" fill="url(#m34)"/>
<path d="M1127.6 32.5Q1191.0 16.1 1254.4 32.5L1254.4 36.1Q1191.0 19.7 1127.6 36.1Z" fill="url(#m35)"/>
<path d="M1128.0 34.5Q1191.1 18.4 1254.2 34.5L1254.2 38.1Q1191.1 22.0 1128.0 38.1Z" fill="url(#m36)"/>
<path d="M1128.4 36.5Q1191.2 20.6 1254.1 36.5L1254.1 40.1Q1191.2 24.2 1128.4 40.1Z" fill="url(#m37)"/>
<path d="M1128.7 38.5Q1191.4 22.8 1254.0 38.5L1254.0 42.1Q1191.4 26.4 1128.7 42.1Z" fill="url(#m37)"/>
<path d="M1128.9 40.5Q1191.4 25.0 1254.0 40.5L1254.0 44.1Q1191.4 28.6 1128.9 44.1Z" fill="url(#m38)"/>
<path d="M1129.0 42.5Q1191.4 27.2 1253.9 42.5L1253.9 46.1Q1191.4 30.8 1129.0 46.1Z" fill="url(#m38)"/>
<path d="M1128.9 44.5Q1191.4 29.4 1253.9 44.5L1253.9 48.1Q1191.4 33.0 1128.9 48.1Z" fill="url(#m38)"/>
<path d="M1128.8 46.5Q1191.4 31.5 1253.9 46.5L1253.9 50.1Q1191.4 35.1 1128.8 50.1Z" fill="url(#m38)"/>
<path d="M1128.6 48.5Q1191.3 33.6 1254.0 48.5L1254.0 52.1Q1191.3 37.2 1128.6 52.1Z" fill="url(#m38)"/>
<path d="M1128.5 50.5Q1191.2 35.8 1254.0 50.5L1254.0 54.1Q1191.2 39.4 1128.5 54.1Z" fill="url(#m38)"/>
<path d="M1128.3 52.5Q1191.2 37.9 1254.1 52.5L1254.1 56.1Q1191.2 41.5 1128.3 56.1Z" fill="url(#m38)"/>
<path d="M1128.3 54.5Q1191.2 40.1 1254.1 54.5L1254.1 58.1Q1191.2 43.7 1128.3 58.1Z" fill="url(#m38)"/>
<path d="M1128.2 56.5Q1191.2 42.2 1254.2 56.5L1254.2 60.1Q1191.2 45.8 1128.2 60.1Z" fill="url(#m38)"/>
<path d="M1128.2 58.5Q1191.3 44.4 1254.3 58.5L1254.3 62.1Q1191.3 48.0 1128.2 62.1Z" fill="url(#m38)"/>
<path d="M1128.2 60.5Q1191.3 46.5 1254.4 60.5L1254.4 64.1Q1191.3 50.1 1128.2 64.1Z" fill="url(#m38)"/>
<path d="M1128.3 62.5Q1191.4 48.7 1254.6 62.5L1254.6 66.1Q1191.4 52.3 1128.3 66.1Z" fill="url(#m38)"/>
<path d="M1128.3 64.5Q1191.5 50.8 1254.7 64.5L1254.7 68.1Q1191.5 54.4 1128.3 68.1Z" fill="url(#m38)"/>
<path d="M1128.3 66.5Q1191.6 53.0 1254.9 66.5L1254.9 70.1Q1191.6 56.6 1128.3 70.1Z" fill="url(#m38)"/>
<path d="M1128.3 68.5Q1191.7 55.1 1255.0 68.5L1255.0 72.1Q1191.7 58.7 1128.3 72.1Z" fill="url(#m38)"/>
<path d="M1128.4 70.5Q1191.8 57.3 1255.2 70.5L1255.2 74.1Q1191.8 60.9 1128.4 74.1Z" fill="url(#m38)"/>
<path d="M1128.4 72.5Q1191.9 59.4 1255.4 72.5L1255.4 76.1Q1191.9 63.0 1128.4 76.1Z" fill="url(#m38)"/>
<path d="M1128.4 74.5Q1192.0 61.6 1255.6 74.5L1255.6 78.1Q1192.0 65.2 1128.4 78.1Z" fill="url(#m38)"/>
<path d="M1128.4 76.5Q1192.1 63.7 1255.8 76.5L1255.8 80.1Q1192.1 67.3 1128.4 80.1Z" fill="url(#m38)"/>
<path d="M1128.4 78.5Q1192.2 65.9 1256.0 78.5L1256.0 82.1Q1192.2 69.5 1128.4 82.1Z" fill="url(#m38)"/>
<path d="M1128.4 80.5Q1192.4 68.0 1256.3 80.5L1256.3 84.1Q1192.4 71.6 1128.4 84.1Z" fill="url(#m38)"/>
<path d="M1128.4 82.5Q1192.5 70.2 1256.6 82.5L1256.6 86.1Q1192.5 73.8 1128.4 86.1Z" fill="url(#m39)"/>
<path d="M1128.4 84.5Q1192.6 72.3 1256.9 84.5L1256.9 88.1Q1192.6 75.9 1128.4 88.1Z" fill="url(#m39)"/>
<path d="M1128.3 86.5Q1192.7 74.4 1257.2 86.5L1257.2 90.1Q1192.7 78.0 1128.3 90.1Z" fill="url(#m39)"/>
<path d="M1128.2 88.5Q1192.9 76.6 1257.5 88.5L1257.5 92.1Q1192.9 80.2 1128.2 92.1Z" fill="url(#m39)"/>
<path d="M1128.2 90.5Q1193.0 78.7 1257.8 90.5L1257.8 94.1Q1193.0 82.3 1128.2 94.1Z" fill="url(#m39)"/>
<path d="M1128.1 92.5Q1193.1 80.8 1258.2 92.5L1258.2 96.1Q1193.1 84.4 1128.1 96.1Z" fill="url(#m39)"/>
<path d="M1128.0 94.5Q1193.3 83.0 1258.5 94.5L1258.5 98.1Q1193.3 86.6 1128.0 98.1Z" fill="url(#m39)"/>
<path d="M1127.9 96.5Q1193.4 85.1 1258.9 96.5L1258.9 100.1Q1193.4 88.7 1127.9 100.1Z" fill="url(#m40)"/>
<path d="M1127.8 98.5Q1193.6 87.2 1259.3 98.5L1259.3 102.1Q1193.6 90.8 1127.8 102.1Z" fill="url(#m40)"/>
<path d="M1127.7 100.5Q1193.7 89.3 1259.7 100.5L1259.7 104.1Q1193.7 92.9 1127.7 104.1Z" fill="url(#m40)"/>
<path d="M1127.6 102.5Q1193.8 91.5 1260.1 102.5L1260.1 106.1Q1193.8 95.1 1127.6 106.1Z" fill="url(#m40)"/>
<path d="M1127.4 104.5Q1193.9 93.6 1260.5 104.5L1260.5 108.1Q1193.9 97.2 1127.4 108.1Z" fill="url(#m40)"/>
<path d="M1127.2 106.5Q1194.1 95.7 1260.9 106.5L1260.9 110.1Q1194.1 99.3 1127.2 110.1Z" fill="url(#m41)"/>
<path d="M1127.0 108.5Q1194.2 97.8 1261.4 108.5L1261.4 112.1Q1194.2 101.4 1127.0 112.1Z" fill="url(#m41)"/>
<path d="M1126.7 110.5Q1194.3 100.0 1261.8 110.5L1261.8 114.1Q1194.3 103.6 1126.7 114.1Z" fill="url(#m42)"/>
<path d="M1126.4 112.5Q1194.3 102.1 1262.2 112.5L1262.2 116.1Q1194.3 105.7 1126.4 116.1Z" fill="url(#m42)"/>
<path d="M1126.1 114.5Q1194.4 104.2 1262.7 114.5L1262.7 118.1Q1194.4 107.8 1126.1 118.1Z" fill="url(#m43)"/>
<path d="M1125.7 116.5Q1194.4 106.3 1263.2 116.5L1263.2 120.1Q1194.4 109.9 1125.7 120.1Z" fill="url(#m43)"/>
<path d="M1125.2 118.5Q1194.4 108.4 1263.6 118.5L1263.6 122.1Q1194.4 112.0 1125.2 122.1Z" fill="url(#m44)"/>
<path d="M1124.7 120.5Q1194.4 110.5 1264.1 120.5L1264.1 124.1Q1194.4 114.1 1124.7 124.1Z" fill="url(#m45)"/>
<path d="M1124.2 122.5Q1194.4 112.7 1264.6 122.5L1264.6 126.1Q1194.4 116.3 1124.2 126.1Z" fill="url(#m45)"/>
<path d="M1123.6 124.5Q1194.4 114.8 1265.1 124.5L1265.1 128.1Q1194.4 118.4 1123.6 128.1Z" fill="url(#m46)"/>
<path d="M1123.0 126.5Q1194.3 116.9 1265.6 126.5L1265.6 130.1Q1194.3 120.5 1123.0 130.1Z" fill="url(#m46)"/>
<path d="M1122.4 128.5Q1194.3 119.0 1266.1 128.5L1266.1 132.1Q1194.3 122.6 1122.4 132.1Z" fill="url(#m47)"/>
<path d="M1121.8 130.5Q1194.2 121.1 1266.7 130.5L1266.7 134.1Q1194.2 124.7 1121.8 134.1Z" fill="url(#m47)"/>
<path d="M1121.2 132.5Q1194.2 123.2 1267.2 132.5L1267.2 136.1Q1194.2 126.8 1121.2 136.1Z" fill="url(#m47)"/>
<path d="M1120.6 134.5Q1194.2 125.3 1267.8 134.5L1267.8 138.1Q1194.2 128.9 1120.6 138.1Z" fill="url(#m47)"/>
<path d="M1120.0 136.5Q1194.2 127.5 1268.4 136.5L1268.4 140.1Q1194.2 131.1 1120.0 140.1Z" fill="url(#m47)"/>
<path d="M1119.3 138.5Q1194.1 129.6 1269.0 138.5L1269.0 142.1Q1194.1 133.2 1119.3 142.1Z" fill="url(#m47)"/>
<path d="M1118.6 140.5Q1194.1 131.7 1269.6 140.5L1269.6 144.1Q1194.1 135.3 1118.6 144.1Z" fill="url(#m47)"/>
<path d="M1117.9 142.5Q1194.1 133.8 1270.3 142.5L1270.3 146.1Q1194.1 137.4 1117.9 146.1Z" fill="url(#m47)"/>
<path d="M1117.2 144.5Q1194.1 135.9 1270.9 144.5L1270.9 148.1Q1194.1 139.5 1117.2 148.1Z" fill="url(#m47)"/>
<path d="M1116.5 146.5Q1194.1 138.1 1271.6 146.5L1271.6 150.1Q1194.1 141.7 1116.5 150.1Z" fill="url(#m47)"/>
<path d="M1115.7 148.5Q1194.0 140.2 1272.4 148.5L1272.4 152.1Q1194.0 143.8 1115.7 152.1Z" fill="url(#m47)"/>
<path d="M1114.8 150.5Q1194.0 142.3 1273.1 150.5L1273.1 154.1Q1194.0 145.9 1114.8 154.1Z" fill="url(#m47)"/>
<path d="M1113.9 152.5Q1193.9 144.4 1273.9 152.5L1273.9 156.1Q1193.9 148.0 1113.9 156.1Z" fill="url(#m47)"/>
<path d="M1112.9 154.5Q1193.8 146.5 1274.6 154.5L1274.6 158.1Q1193.8 150.1 1112.9 158.1Z" fill="url(#m47)"/>
<path d="M1111.7 156.5Q1193.6 148.7 1275.4 156.5L1275.4 160.1Q1193.6 152.3 1111.7 160.1Z" fill="url(#m47)"/>
<path d="M1110.5 158.5Q1193.4 150.8 1276.3 158.5L1276.3 162.1Q1193.4 154.4 1110.5 162.1Z" fill="url(#m47)"/>
<path d="M1109.2 160.5Q1193.1 152.9 1277.1 160.5L1277.1 164.1Q1193.1 156.5 1109.2 164.1Z" fill="url(#m47)"/>
<path d="M1107.8 162.5Q1192.9 155.0 1278.0 162.5L1278.0 166.1Q1192.9 158.6 1107.8 166.1Z" fill="url(#m47)"/>
<path d="M1106.4 164.5Q1192.6 157.2 1278.8 164.5L1278.8 168.1Q1192.6 160.8 1106.4 168.1Z" fill="url(#m47)"/>
<path d="M1105.1 166.5Q1192.4 159.3 1279.7 166.5L1279.7 170.1Q1192.4 162.9 1105.1 170.1Z" fill="url(#m47)"/>
<path d="M1103.7 168.5Q1192.2 161.4 1280.6 168.5L1280.6 172.1Q1192.2 165.0 1103.7 172.1Z" fill="url(#m47)"/>
<path d="M1102.3 170.5Q1192.0 163.6 1281.6 170.5L1281.6 174.1Q1192.0 167.2 1102.3 174.1Z" fill="url(#m47)"/>
<path d="M1100.9 172.5Q1191.8 165.7 1282.6 172.5L1282.6 176.1Q1191.8 169.3 1100.9 176.1Z" fill="url(#m47)"/>
<path d="M1099.5 174.5Q1191.6 167.9 1283.7 174.5L1283.7 178.1Q1191.6 171.5 1099.5 178.1Z" fill="url(#m47)"/>
<path d="M1098.0 176.5Q1191.4 170.0 1284.8 176.5L1284.8 180.1Q1191.4 173.6 1098.0 180.1Z" fill="url(#m47)"/>
<path d="M1096.5 178.5Q1191.2 172.2 1285.9 178.5L1285.9 182.1Q1191.2 175.8 1096.5 182.1Z" fill="url(#m47)"/>
<path d="M1095.1 180.5Q1191.1 174.3 1287.0 180.5L1287.0 184.1Q1191.1 177.9 1095.1 184.1Z" fill="url(#m47)"/>
<path d="M1093.7 182.5Q1190.9 176.5 1288.2 182.5L1288.2 186.1Q1190.9 180.1 1093.7 186.1Z" fill="url(#m47)"/>
<path d="M1092.3 184.5Q1190.8 178.7 1289.4 184.5L1289.4 188.1Q1190.8 182.3 1092.3 188.1Z" fill="url(#m47)"/>
<path d="M1090.9 186.5Q1190.7 180.9 1290.5 186.5L1290.5 190.1Q1190.7 184.5 1090.9 190.1Z" fill="url(#m47)"/>
<path d="M1089.6 188.5Q1190.6 183.1 1291.6 188.5L1291.6 192.1Q1190.6 186.7 1089.6 192.1Z" fill="url(#m47)"/>
<path d="M1088.2 190.5Q1190.4 185.3 1292.6 190.5L1292.6 194.1Q1190.4 188.9 1088.2 194.1Z" fill="url(#m47)"/>
<path d="M1086.9 192.5Q1190.2 187.5 1293.6 192.5L1293.6 196.1Q1190.2 191.1 1086.9 196.1Z" fill="url(#m39)"/>
<path d="M1086.8 194.5Q1189.7 189.8 1292.6 194.5L1292.6 198.1Q1189.7 193.4 1086.8 198.1Z" fill="url(#m29)"/>
<path d="M1087.5 196.5Q1189.3 192.1 1291.1 196.5L1291.1 200.1Q1189.3 195.7 1087.5 200.1Z" fill="url(#m10)"/>
<path d="M1088.8 198.5Q1189.2 194.4 1289.6 198.5L1289.6 202.1Q1189.2 198.0 1088.8 202.1Z" fill="url(#m5)"/>
<path d="M1090.2 200.5Q1189.2 196.8 1288.1 200.5L1288.1 204.1Q1189.2 200.4 1090.2 204.1Z" fill="url(#m3)"/>
<path d="M1091.9 202.5Q1189.2 199.1 1286.6 202.5L1286.6 206.1Q1189.2 202.7 1091.9 206.1Z" fill="url(#m1)"/>
<path d="M1093.8 204.5Q1189.5 201.4 1285.1 204.5L1285.1 208.1Q1189.5 205.0 1093.8 208.1Z" fill="url(#m0)"/>
<path d="M1096.3 206.5Q1190.0 203.7 1283.6 206.5L1283.6 210.1Q1190.0 207.3 1096.3 210.1Z" fill="url(#m0)"/>
<path d="M1099.0 208.5Q1190.6 206.0 1282.1 208.5L1282.1 212.1Q1190.6 209.6 1099.0 212.1Z" fill="url(#m5)"/>
<path d="M1101.9 210.5Q1191.2 208.3 1280.6 210.5L1280.6 214.1Q1191.2 211.9 1101.9 214.1Z" fill="url(#m39)"/>
<path d="M1099.7 212.5Q1191.1 210.5 1282.5 212.5L1282.5 216.1Q1191.1 214.1 1099.7 216.1Z" fill="url(#m47)"/>
<path d="M1096.2 214.5Q1191.1 212.7 1286.0 214.5L1286.0 218.1Q1191.1 216.3 1096.2 218.1Z" fill="url(#m47)"/>
<path d="M1093.2 216.5Q1190.8 214.9 1288.3 216.5L1288.3 220.1Q1190.8 218.5 1093.2 220.1Z" fill="url(#m47)"/>
<path d="M1091.2 218.5Q1190.7 217.1 1290.2 218.5L1290.2 222.1Q1190.7 220.7 1091.2 222.1Z" fill="url(#m47)"/>
<path d="M1089.6 220.5Q1190.8 219.3 1291.9 220.5L1291.9 224.1Q1190.8 222.9 1089.6 224.1Z" fill="url(#m47)"/>
<path d="M1088.4 222.5Q1190.9 221.6 1293.3 222.5L1293.3 226.1Q1190.9 225.2 1088.4 226.1Z" fill="url(#m47)"/>
<path d="M1087.5 224.5Q1191.0 223.9 1294.5 224.5L1294.5 228.1Q1191.0 227.5 1087.5 228.1Z" fill="url(#m47)"/>
<path d="M1086.8 226.5Q1191.0 226.1 1295.1 226.5L1295.1 230.1Q1191.0 229.7 1086.8 230.1Z" fill="url(#m47)"/>
<path d="M1086.3 228.5Q1190.9 228.4 1295.5 228.5L1295.5 232.1Q1190.9 232.0 1086.3 232.1Z" fill="url(#m41)"/>
<path d="M1153.3 366.5Q1177.7 370.8 1202.1 366.5L1202.1 370.1Q1177.7 374.4 1153.3 370.1Z" fill="url(#m0)"/>
<path d="M1134.3 364.5Q1179.6 372.5 1224.9 364.5L1224.9 368.1Q1179.6 376.1 1134.3 368.1Z" fill="url(#m0)"/>
<path d="M1123.4 362.5Q1182.6 372.8 1241.8 362.5L1241.8 366.1Q1182.6 376.4 1123.4 366.1Z" fill="url(#m0)"/>
<path d="M1115.3 360.5Q1185.3 372.6 1255.4 360.5L1255.4 364.1Q1185.3 376.2 1115.3 364.1Z" fill="url(#m0)"/>
<path d="M1108.7 358.5Q1187.1 371.8 1265.5 358.5L1265.5 362.1Q1187.1 375.4 1108.7 362.1Z" fill="url(#m0)"/>
<path d="M1103.4 356.5Q1188.3 370.8 1273.3 356.5L1273.3 360.1Q1188.3 374.4 1103.4 360.1Z" fill="url(#m0)"/>
<path d="M1099.1 354.5Q1189.4 369.4 1279.7 354.5L1279.7 358.1Q1189.4 373.0 1099.1 358.1Z" fill="url(#m0)"/>
<path d="M1096.0 352.5Q1190.8 367.9 1285.5 352.5L1285.5 356.1Q1190.8 371.5 1096.0 356.1Z" fill="url(#m0)"/>
<path d="M1093.7 350.5Q1192.0 366.2 1290.3 350.5L1290.3 354.1Q1192.0 369.8 1093.7 354.1Z" fill="url(#m0)"/>
<path d="M1091.8 348.5Q1192.6 364.4 1293.3 348.5L1293.3 352.1Q1192.6 368.0 1091.8 352.1Z" fill="url(#m0)"/>
<path d="M1090.1 346.5Q1192.7 362.4 1295.3 346.5L1295.3 350.1Q1192.7 366.0 1090.1 350.1Z" fill="url(#m2)"/>
<path d="M1088.6 344.5Q1192.6 360.3 1296.6 344.5L1296.6 348.1Q1192.6 363.9 1088.6 348.1Z" fill="url(#m11)"/>
<path d="M1087.0 342.5Q1191.8 358.2 1296.6 342.5L1296.6 346.1Q1191.8 361.8 1087.0 346.1Z" fill="url(#m29)"/>
<path d="M1086.5 340.5Q1191.5 355.9 1296.5 340.5L1296.5 344.1Q1191.5 359.5 1086.5 344.1Z" fill="url(#m37)"/>
<path d="M1086.5 338.5Q1191.5 353.7 1296.5 338.5L1296.5 342.1Q1191.5 357.3 1086.5 342.1Z" fill="url(#m38)"/>
<path d="M1086.5 336.5Q1191.5 351.4 1296.5 336.5L1296.5 340.1Q1191.5 355.0 1086.5 340.1Z" fill="url(#m38)"/>
<path d="M1086.5 334.5Q1191.5 349.1 1296.5 334.5L1296.5 338.1Q1191.5 352.7 1086.5 338.1Z" fill="url(#m38)"/>
<path d="M1086.5 332.5Q1191.4 346.8 1296.4 332.5L1296.4 336.1Q1191.4 350.4 1086.5 336.1Z" fill="url(#m38)"/>
<path d="M1086.5 330.5Q1191.4 344.6 1296.4 330.5L1296.4 334.1Q1191.4 348.2 1086.5 334.1Z" fill="url(#m38)"/>
<path d="M1086.5 328.5Q1191.4 342.3 1296.4 328.5L1296.4 332.1Q1191.4 345.9 1086.5 332.1Z" fill="url(#m38)"/>
<path d="M1086.5 326.5Q1191.4 340.0 1296.4 326.5L1296.4 330.1Q1191.4 343.6 1086.5 330.1Z" fill="url(#m38)"/>
<path d="M1086.5 324.5Q1191.4 337.7 1296.3 324.5L1296.3 328.1Q1191.4 341.3 1086.5 328.1Z" fill="url(#m38)"/>
<path d="M1086.5 322.5Q1191.4 335.4 1296.3 322.5L1296.3 326.1Q1191.4 339.0 1086.5 326.1Z" fill="url(#m38)"/>
<path d="M1086.5 320.5Q1191.4 333.2 1296.3 320.5L1296.3 324.1Q1191.4 336.8 1086.5 324.1Z" fill="url(#m38)"/>
<path d="M1086.5 318.5Q1191.4 330.9 1296.2 318.5L1296.2 322.1Q1191.4 334.5 1086.5 322.1Z" fill="url(#m38)"/>
<path d="M1086.5 316.5Q1191.3 328.6 1296.2 316.5L1296.2 320.1Q1191.3 332.2 1086.5 320.1Z" fill="url(#m38)"/>
<path d="M1086.5 314.5Q1191.3 326.3 1296.2 314.5L1296.2 318.1Q1191.3 329.9 1086.5 318.1Z" fill="url(#m38)"/>
<path d="M1086.5 312.5Q1191.3 324.0 1296.2 312.5L1296.2 316.1Q1191.3 327.6 1086.5 316.1Z" fill="url(#m38)"/>
<path d="M1086.5 310.5Q1191.3 321.8 1296.1 310.5L1296.1 314.1Q1191.3 325.4 1086.5 314.1Z" fill="url(#m38)"/>
<path d="M1086.5 308.5Q1191.3 319.5 1296.1 308.5L1296.1 312.1Q1191.3 323.1 1086.5 312.1Z" fill="url(#m38)"/>
<path d="M1086.5 306.5Q1191.3 317.2 1296.1 306.5L1296.1 310.1Q1191.3 320.8 1086.5 310.1Z" fill="url(#m38)"/>
<path d="M1086.5 304.5Q1191.3 314.9 1296.1 304.5L1296.1 308.1Q1191.3 318.5 1086.5 308.1Z" fill="url(#m38)"/>
<path d="M1086.5 302.5Q1191.3 312.6 1296.0 302.5L1296.0 306.1Q1191.3 316.2 1086.5 306.1Z" fill="url(#m38)"/>
<path d="M1086.5 300.5Q1191.2 310.4 1296.0 300.5L1296.0 304.1Q1191.2 314.0 1086.5 304.1Z" fill="url(#m38)"/>
<path d="M1086.5 298.5Q1191.2 308.1 1296.0 298.5L1296.0 302.1Q1191.2 311.7 1086.5 302.1Z" fill="url(#m38)"/>
<path d="M1086.5 296.5Q1191.2 305.8 1295.9 296.5L1295.9 300.1Q1191.2 309.4 1086.5 300.1Z" fill="url(#m38)"/>
<path d="M1086.5 294.5Q1191.2 303.5 1295.9 294.5L1295.9 298.1Q1191.2 307.1 1086.5 298.1Z" fill="url(#m38)"/>
<path d="M1086.5 292.5Q1191.2 301.3 1295.9 292.5L1295.9 296.1Q1191.2 304.9 1086.5 296.1Z" fill="url(#m38)"/>
<path d="M1086.5 290.5Q1191.2 299.0 1295.9 290.5L1295.9 294.1Q1191.2 302.6 1086.5 294.1Z" fill="url(#m38)"/>
<path d="M1086.5 288.5Q1191.2 296.7 1295.8 288.5L1295.8 292.1Q1191.2 300.3 1086.5 292.1Z" fill="url(#m38)"/>
<path d="M1086.5 286.5Q1191.2 294.4 1295.8 286.5L1295.8 290.1Q1191.2 298.0 1086.5 290.1Z" fill="url(#m38)"/>
<path d="M1086.5 284.5Q1191.1 292.1 1295.8 284.5L1295.8 288.1Q1191.1 295.7 1086.5 288.1Z" fill="url(#m38)"/>
<path d="M1086.5 282.5Q1191.1 289.9 1295.8 282.5L1295.8 286.1Q1191.1 293.5 1086.5 286.1Z" fill="url(#m38)"/>
<path d="M1086.5 280.5Q1191.1 287.6 1295.7 280.5L1295.7 284.1Q1191.1 291.2 1086.5 284.1Z" fill="url(#m38)"/>
<path d="M1086.5 278.5Q1191.1 285.3 1295.7 278.5L1295.7 282.1Q1191.1 288.9 1086.5 282.1Z" fill="url(#m38)"/>
<path d="M1086.5 276.5Q1191.1 283.0 1295.7 276.5L1295.7 280.1Q1191.1 286.6 1086.5 280.1Z" fill="url(#m38)"/>
<path d="M1086.5 274.5Q1191.1 280.8 1295.7 274.5L1295.7 278.1Q1191.1 284.4 1086.5 278.1Z" fill="url(#m38)"/>
<path d="M1086.5 272.5Q1191.1 278.5 1295.6 272.5L1295.6 276.1Q1191.1 282.1 1086.5 276.1Z" fill="url(#m38)"/>
<path d="M1086.5 270.5Q1191.1 276.2 1295.6 270.5L1295.6 274.1Q1191.1 279.8 1086.5 274.1Z" fill="url(#m38)"/>
<path d="M1086.5 268.5Q1191.0 273.9 1295.6 268.5L1295.6 272.1Q1191.0 277.5 1086.5 272.1Z" fill="url(#m39)"/>
<path d="M1086.9 266.5Q1191.2 271.6 1295.5 266.5L1295.5 270.1Q1191.2 275.2 1086.9 270.1Z" fill="url(#m47)"/>
<path d="M1087.7 264.5Q1191.2 269.3 1294.6 264.5L1294.6 268.1Q1191.2 272.9 1087.7 268.1Z" fill="url(#m47)"/>
<path d="M1088.7 262.5Q1190.9 267.0 1293.1 262.5L1293.1 266.1Q1190.9 270.6 1088.7 266.1Z" fill="url(#m47)"/>
<path d="M1090.0 260.5Q1190.8 264.7 1291.6 260.5L1291.6 264.1Q1190.8 268.3 1090.0 264.1Z" fill="url(#m47)"/>
<path d="M1092.2 258.5Q1191.0 262.3 1289.8 258.5L1289.8 262.1Q1191.0 265.9 1092.2 262.1Z" fill="url(#m47)"/>
<path d="M1095.0 256.5Q1191.3 260.0 1287.7 256.5L1287.7 260.1Q1191.3 263.6 1095.0 260.1Z" fill="url(#m47)"/>
<path d="M1098.1 254.5Q1191.4 257.6 1284.8 254.5L1284.8 258.1Q1191.4 261.2 1098.1 258.1Z" fill="url(#m47)"/>
<path d="M1101.3 252.5Q1191.4 255.3 1281.5 252.5L1281.5 256.1Q1191.4 258.9 1101.3 256.1Z" fill="url(#m40)"/>
<path d="M1098.3 250.5Q1190.8 253.1 1283.3 250.5L1283.3 254.1Q1190.8 256.7 1098.3 254.1Z" fill="url(#m1)"/>
<path d="M1094.9 248.5Q1190.5 250.9 1286.0 248.5L1286.0 252.1Q1190.5 254.5 1094.9 252.1Z" fill="url(#m0)"/>
<path d="M1092.4 246.5Q1190.4 248.7 1288.5 246.5L1288.5 250.1Q1190.4 252.3 1092.4 250.1Z" fill="url(#m0)"/>
<path d="M1090.4 244.5Q1190.4 246.5 1290.4 244.5L1290.4 248.1Q1190.4 250.1 1090.4 248.1Z" fill="url(#m0)"/>
<path d="M1088.8 242.5Q1190.4 244.3 1292.1 242.5L1292.1 246.1Q1190.4 247.9 1088.8 246.1Z" fill="url(#m4)"/>
<path d="M1087.6 240.5Q1190.6 242.0 1293.5 240.5L1293.5 244.1Q1190.6 245.6 1087.6 244.1Z" fill="url(#m10)"/>
<path d="M1086.9 238.5Q1190.7 239.8 1294.6 238.5L1294.6 242.1Q1190.7 243.4 1086.9 242.1Z" fill="url(#m22)"/>
<path d="M1086.4 236.5Q1190.8 237.5 1295.3 236.5L1295.3 240.1Q1190.8 241.1 1086.4 240.1Z" fill="url(#m32)"/>
<path d="M1086.1 234.5Q1190.9 235.2 1295.6 234.5L1295.6 238.1Q1190.9 238.8 1086.1 238.1Z" fill="url(#m36)"/>
<path d="M1086.0 232.5Q1190.9 233.0 1295.7 232.5L1295.7 236.1Q1190.9 236.6 1086.0 236.1Z" fill="url(#m38)"/>
<path d="M1086.1 230.5Q1190.9 230.7 1295.7 230.5L1295.7 234.1Q1190.9 234.3 1086.1 234.1Z" fill="url(#m39)"/>
</g>
<path transform="rotate(17.00)" d="M1164.9 -152.6L1170.9 -152.6Q1192.6 -162.7 1214.2 -150.8L1220.2 -150.8" fill="none" stroke="#000" stroke-opacity="0.50" stroke-width="1.2" filter="url(#bl1)"/>
<path transform="rotate(17.00)" d="M1102.6 -40.7L1108.6 -40.7Q1192.2 -72.7 1275.7 -44.0L1281.7 -44.0" fill="none" stroke="#000" stroke-opacity="0.85" stroke-width="2.2" filter="url(#bl1)"/>
<path transform="rotate(17.00)" d="M1115.4 -21.5L1121.4 -21.5Q1192.3 -45.3 1263.2 -21.5L1269.2 -21.5" fill="none" stroke="#000" stroke-opacity="1.00" stroke-width="2.6" filter="url(#bl1)"/>
<path transform="rotate(17.00)" d="M1112.0 5.0L1118.0 5.0Q1191.4 -17.3 1264.8 4.4L1270.8 4.4" fill="none" stroke="#000" stroke-opacity="0.60" stroke-width="1.4" filter="url(#bl1)"/>
<path transform="rotate(17.00)" d="M1097.5 211.9L1103.5 211.9Q1191.2 210.0 1279.0 212.3L1285.0 212.3" fill="none" stroke="#000" stroke-opacity="1.00" stroke-width="2.8" filter="url(#bl1)"/>
<path transform="rotate(17.00)" d="M1096.6 253.3L1102.6 253.3Q1191.3 256.0 1279.9 253.1L1285.9 253.1" fill="none" stroke="#000" stroke-opacity="1.00" stroke-width="2.8" filter="url(#bl1)"/>
</g>
<path d="M1170.4 169.2 C1171.0 168.2 1172.1 164.5 1174.0 163.2 C1175.9 161.9 1179.3 161.8 1182.0 161.6 C1184.7 161.4 1187.3 161.6 1190.0 162.0 C1192.7 162.4 1195.3 162.9 1198.0 164.0 C1200.7 165.1 1203.3 166.7 1206.0 168.4 C1208.7 170.1 1212.5 172.4 1214.0 174.0 C1215.5 175.6 1215.0 176.3 1214.7 178.0 C1214.4 179.7 1213.5 182.4 1212.4 184.4 C1211.4 186.4 1209.9 188.3 1208.4 190.0 C1206.9 191.7 1204.7 193.2 1203.6 194.8 C1202.5 196.4 1202.1 197.7 1202.0 199.6 C1201.9 201.5 1202.3 204.1 1202.8 206.0 C1203.3 207.9 1204.8 210.0 1205.2 210.8 C1209.5 213.4 1223.4 220.3 1231.0 226.6 C1238.6 232.9 1245.6 241.3 1250.8 248.7 C1256.0 256.1 1260.0 264.9 1262.0 270.8 C1264.0 276.7 1263.2 278.8 1263.0 284.0 C1262.8 289.2 1263.0 295.9 1260.8 301.8 C1258.6 307.7 1253.2 315.4 1250.0 319.2 C1246.8 323.0 1244.3 322.9 1241.4 324.8 C1238.5 326.8 1234.2 329.9 1232.8 330.9 C1232.4 331.5 1230.9 333.0 1230.3 334.6 C1229.7 336.2 1230.0 339.0 1229.0 340.8 C1228.0 342.6 1226.7 344.4 1224.2 345.7 C1221.8 347.0 1216.0 348.3 1214.3 348.8 C1214.9 350.1 1217.3 354.5 1218.0 356.8 C1218.7 359.1 1219.0 360.9 1218.6 362.9 C1218.2 364.9 1217.2 367.1 1215.5 369.0 C1213.8 370.9 1209.4 373.2 1208.2 374.0 C1206.8 375.2 1202.2 378.5 1199.5 381.4 C1196.8 384.3 1194.7 386.4 1192.2 391.2 C1189.8 396.0 1187.2 401.9 1184.8 410.0 C1182.3 418.1 1179.4 429.9 1177.5 440.0 C1175.6 450.1 1174.5 459.7 1173.5 470.5 C1172.5 481.3 1171.7 494.2 1171.8 505.0 C1171.9 515.8 1172.8 526.2 1174.0 535.0 C1175.2 543.8 1177.8 553.3 1178.7 558.0 C1179.6 562.7 1179.4 562.5 1179.6 563.4 L1161.0 577.0 C1161.8 577.8 1164.5 579.8 1166.0 582.0 C1167.5 584.2 1169.2 587.6 1170.0 590.0 C1170.8 592.4 1171.3 593.9 1171.0 596.6 C1170.7 599.3 1169.8 603.4 1168.0 606.0 C1166.2 608.6 1163.0 610.8 1160.0 612.5 C1157.0 614.2 1151.7 615.7 1150.0 616.3 C1151.0 617.5 1154.3 620.8 1156.0 623.7 C1157.7 626.6 1159.3 631.9 1160.0 633.5 L1137.8 709.8 C1136.0 710.4 1134.3 713.1 1126.7 713.5 C1119.1 713.9 1108.0 714.5 1092.0 712.2 C1076.0 710.0 1049.1 704.9 1030.7 700.0 C1012.3 695.1 995.0 688.9 981.5 682.7 C968.0 676.5 956.5 669.1 949.5 663.0 C942.5 656.9 941.3 648.7 939.7 645.8 C942.6 636.5 953.2 601.9 956.8 590.0 C960.4 578.1 960.7 577.2 961.5 574.7 C962.5 573.7 964.5 570.3 967.6 568.6 C970.8 566.9 978.3 565.3 980.4 564.6 C979.3 563.4 975.4 559.9 973.7 557.1 C972.0 554.3 970.4 551.1 970.3 547.7 C970.2 544.3 971.2 540.0 973.0 536.8 C974.8 533.6 977.7 530.6 981.1 528.7 C984.5 526.8 991.3 525.9 993.3 525.3 C992.2 523.7 988.2 518.9 986.5 515.9 C984.8 512.9 983.7 509.1 983.2 507.0 C982.8 504.9 983.7 503.7 983.8 503.0 C985.6 501.6 990.3 497.8 994.4 494.6 C998.5 491.4 1003.6 487.8 1008.2 484.0 C1012.8 480.2 1017.4 477.2 1022.0 472.0 C1026.6 466.8 1032.0 459.0 1036.0 453.0 C1040.0 447.0 1042.8 442.8 1046.0 436.0 C1049.2 429.2 1052.1 420.6 1055.0 412.0 C1057.9 403.4 1061.0 391.7 1063.3 384.4 C1065.6 377.1 1067.7 374.6 1068.8 368.0 C1069.9 361.4 1070.1 351.1 1069.9 345.0 C1069.7 338.9 1068.1 333.9 1067.7 331.7 C1067.1 330.2 1064.3 325.4 1063.9 322.8 C1063.5 320.2 1064.3 318.3 1065.5 316.2 C1066.7 314.1 1068.8 311.5 1071.0 310.0 C1073.2 308.5 1077.4 307.8 1078.7 307.3 C1077.8 306.6 1074.7 305.1 1073.2 302.9 C1071.7 300.7 1070.1 296.9 1069.9 294.0 C1069.7 291.1 1071.7 286.7 1072.1 285.2 C1071.2 283.7 1068.1 280.4 1066.6 276.3 C1065.1 272.2 1063.4 266.7 1063.2 260.8 C1063.0 254.9 1063.5 247.6 1065.5 241.0 C1067.5 234.4 1070.4 226.9 1075.4 221.0 C1080.4 215.1 1086.8 209.6 1095.3 205.5 C1103.8 201.4 1117.2 197.9 1126.3 196.6 C1135.4 195.3 1143.7 197.5 1150.0 197.5 C1156.3 197.5 1162.0 196.6 1164.4 196.4 C1165.5 195.6 1169.3 193.5 1170.8 191.6 C1172.3 189.7 1173.5 187.1 1173.6 185.2 C1173.7 183.3 1172.3 182.3 1171.6 180.4 C1170.9 178.5 1169.4 175.9 1169.2 174.0 C1169.0 172.1 1170.2 170.0 1170.4 169.2Z" fill="none" stroke="#2e241c" stroke-opacity="0.7" stroke-width="1"/>
</svg>
<div class="a" style="left:813.7px;top:94.3px;width:231.7px;height:32.6px;background:#f3f3f3"></div>
<div class="a" style="left:1285px;top:94.3px;width:132.5px;height:32.3px;background:#f3f3f3"></div>
<svg style="left:0;top:0" width="1445" height="813"><path d="M825.7 101.8 L836.3 104.8 L833.9 112.7 L821.8 110.4Z" fill="#f4da88"/><path d="M821.8 110.4 L833.9 112.7 L834.2 119.2 L823.3 116.3Z" fill="#a08848"/><path d="M836.3 104.8 L838.6 110.4 L834.2 119.2 L833.9 112.7Z" fill="#d4bc6c"/><g fill="none" stroke="#a4a4a4" stroke-width="1.2"><rect x="854.2" y="106.8" width="7.2" height="7.2"/><circle cx="867.6" cy="105.9" r="3.8"/><path d="M864.9 112.8 L869 119 H860.8Z"/></g><path d="M890.6 103.2 L905.9 107.2 L900.5 117.6 L887 114.4Z" fill="#d2d2d2" stroke="#c4c4c4" stroke-width="0.6"/><path d="M891.2 104.2 L904.6 107.8 L902.3 112.5 L889.2 109.6Z" fill="#efefef"/><path d="M894 106.5 C895 105.5 896 106 896.5 107 L900.5 111.5 L896 111 C894.5 110.5 893.5 108 894 106.5Z" fill="#7a7a7a"/><defs><linearGradient id="pln" x1="0" y1="0" x2="0" y2="1"><stop offset="0" stop-color="#ffffff"/><stop offset="1" stop-color="#f4efdc"/></linearGradient></defs><path d="M925.2 103.2 L939.2 107.2 L932.9 118 L919.8 114Z" fill="url(#pln)" stroke="#c8b88a" stroke-width="0.9"/><g fill="none" stroke="#a8a8a8" stroke-width="1"><path d="M958.5 101.2 L969.6 104.7 L971.6 110.9 L967.1 119.9 L955 116.8 L953.7 110.2Z"/><path d="M953.7 110.2 L967 112 L971.6 110.9 M967 112 L967.1 119.9"/><path d="M958.5 101.2 L958.3 108 L969.6 104.7 M958.3 108 L955 116.8" stroke="#d0d0d0"/></g><g stroke="#a8a8a8" stroke-width="1.1" fill="none"><path d="M995.9 105 V116.5 M995.9 116.5 L991 112.5 M995.9 116.5 L1000.8 112.5"/></g><text x="995.9" y="107.3" font-size="4.5" text-anchor="middle" fill="#a8a8a8" font-family="Liberation Sans">Z</text><text x="988.5" y="113.3" font-size="4.5" text-anchor="middle" fill="#a8a8a8" font-family="Liberation Sans">Y</text><text x="1002.8" y="113.3" font-size="4.5" text-anchor="middle" fill="#a8a8a8" font-family="Liberation Sans">X</text><g transform="translate(1016.7 99.5)"><path d="M3 10.5 C3.8 9 5 9 5.8 10.3 L9.8 16.3 C10.6 17.8 12.6 17.6 12.2 16.2 L6.3 5.6 C5.6 3.8 7.6 3.2 8.4 4.4 L15.9 16.3 C16.7 17.8 18.7 17.6 18.3 16.2 L12 5.6 C11.3 3.8 13.3 3.2 14.1 4.4 L19.5 12.3 C20 13 20.5 12 20.8 11.1" fill="none" stroke="#5b79b5" stroke-width="1.1"/></g><path d="M1301.2 101 L1309.7 104.1 L1309.3 113.1 L1301.2 120.3 L1293.1 112.2 L1293.1 104.1Z" fill="#bdbdbd"/><path d="M1301.2 101 L1309.7 104.1 L1301.2 107.5 L1293.1 104.1Z" fill="#f6f6f6"/><path d="M1293.1 104.1 L1301.2 107.5 V120.3 L1293.1 112.2Z" fill="#dedede"/><path d="M1301.2 111.5 V119.5 M1296 114.8 L1301.2 120 L1306.4 114.8" stroke="#111" stroke-width="1.5" fill="none"/><rect x="1325.8" y="101.7" width="12" height="12" fill="none" stroke="#b0b0b0" stroke-width="1" stroke-dasharray="1.2 1.2"/><circle cx="1337.3" cy="113.4" r="3.2" fill="#fff" fill-opacity="0.6" stroke="#111" stroke-width="1.3"/><path d="M1339.6 115.7L1342.9 119.0" stroke="#111" stroke-width="2" stroke-linecap="round"/><circle cx="1337.3" cy="113.4" r="0.9" fill="#111"/><path d="M1358.8 101.7H1366.8L1370.8 105.7V113.7H1358.8Z" fill="#fafafa" stroke="#c0c0c0" stroke-width="1.1"/><path d="M1366.8 101.7L1370.8 105.7" stroke="#ddd" stroke-width="1"/><circle cx="1370.3" cy="113.4" r="3.2" fill="#fff" fill-opacity="0.6" stroke="#111" stroke-width="1.3"/><path d="M1372.6 115.7L1375.9 119.0" stroke="#111" stroke-width="2" stroke-linecap="round"/><rect x="1391.8" y="101.7" width="12.3" height="12.3" fill="none" stroke="#ee55ee" stroke-width="1.2"/><circle cx="1403.5" cy="113.4" r="3.2" fill="#fff" fill-opacity="0.6" stroke="#111" stroke-width="1.3"/><path d="M1405.8 115.7L1409.1 119.0" stroke="#111" stroke-width="2" stroke-linecap="round"/><circle cx="1403.5" cy="113.4" r="0.9" fill="#111"/></svg>
<svg style="left:0;top:0" width="1445" height="813"><path d="M1360.1 134.4 L1410.3 149.1 L1395 198.3 L1344.8 184.1Z" fill="#ababab"/><path d="M1383.2 138.8 L1400.5 170.8 L1368 188 L1351.2 156.5Z" fill="#d9d9d9"/><path d="M1354 186.5 L1386 196" stroke="#555" stroke-width="0.8" stroke-dasharray="1 1.5"/><path d="M1407 162 L1398.5 190" stroke="#555" stroke-width="0.8" stroke-dasharray="1 1.5"/><text x="0" y="0" transform="translate(1376.5 167.5) rotate(17)" text-anchor="middle" font-family="Liberation Sans" font-weight="bold" font-style="italic" font-size="10.5" fill="#222" stroke="#222" stroke-width="0.35">TOP</text></svg>
<svg style="left:0;top:0" width="1445" height="813"><circle cx="1386.7" cy="768.6" r="12.3" fill="#eeeeee" stroke="#a8a8a8" stroke-width="0.9"/><text x="1386.7" y="773.5" text-anchor="middle" font-family="Liberation Sans" font-size="14" fill="#666">?</text></svg>

<!-- ============ STATUS ============ -->
<div class="t fit" style="left:4px;top:799.6px;color:#222;transform:scaleX(0.8737);transform-origin:0 0">Ready</div>
<div class="t fit" style="left:1343px;top:799.6px;color:#222;transform:scaleX(0.8612);transform-origin:0 0">X(3.4179) Y(0.5631)</div>
<svg style="left:1432px;top:800px" width="9" height="9"><g fill="#c4c4c4"><rect x="6" y="1" width="1.2" height="1.2"/><rect x="4" y="3" width="1.2" height="1.2"/><rect x="6" y="3" width="1.2" height="1.2"/><rect x="2" y="5" width="1.2" height="1.2"/><rect x="4" y="5" width="1.2" height="1.2"/><rect x="6" y="5" width="1.2" height="1.2"/></g></svg>
<svg style="left:796px;top:783px" width="9" height="9"><g fill="#b8b8b8"><rect x="6" y="1" width="1.2" height="1.2"/><rect x="4" y="3" width="1.2" height="1.2"/><rect x="6" y="3" width="1.2" height="1.2"/><rect x="2" y="5" width="1.2" height="1.2"/><rect x="4" y="5" width="1.2" height="1.2"/><rect x="6" y="5" width="1.2" height="1.2"/></g></svg>
</body></html>
